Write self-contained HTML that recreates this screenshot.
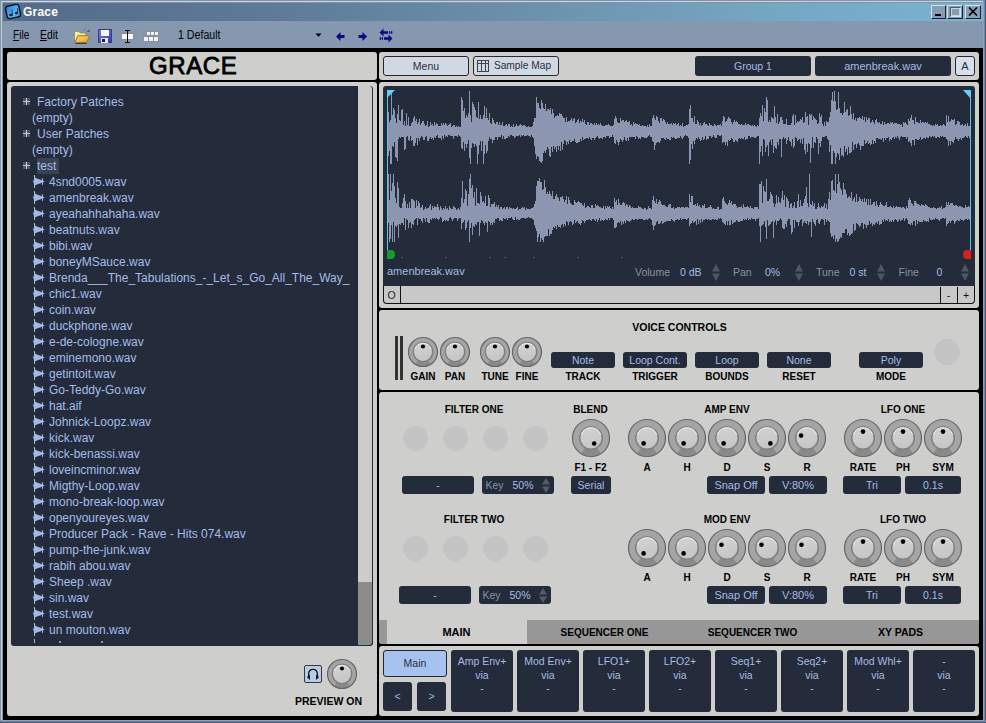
<!DOCTYPE html>
<html><head><meta charset="utf-8"><style>
html,body{margin:0;padding:0;width:986px;height:723px;overflow:hidden;background:#000}
body{position:relative;font-family:"Liberation Sans",sans-serif}
body div, body svg{position:absolute}
.t{white-space:nowrap}
</style></head><body>
<svg width="0" height="0" style="left:0;top:0"><defs><linearGradient id="kg" x1="0" y1="0" x2="0.3" y2="1"><stop offset="0" stop-color="#d4d4d4"/><stop offset="1" stop-color="#c6c6c6"/></linearGradient></defs></svg>
<div style="left:0px;top:0px;width:986px;height:723px;background:#000;"></div>
<div style="left:0px;top:0px;width:986px;height:3px;background:#7f93ab;"></div>
<div style="left:0px;top:0px;width:3px;height:723px;background:#8094ac;"></div>
<div style="left:1px;top:1px;width:984px;height:1px;background:#c8d4e0;"></div>
<div style="left:1px;top:1px;width:1px;height:721px;background:#c4d0dc;"></div>
<div style="left:983px;top:0px;width:3px;height:723px;background:#6e84a2;"></div>
<div style="left:983px;top:1px;width:1px;height:720px;background:#8aa0bd;"></div>
<div style="left:985px;top:0px;width:1px;height:723px;background:#4a5a70;"></div>
<div style="left:0px;top:720px;width:986px;height:3px;background:#6e84a2;"></div>
<div style="left:1px;top:720px;width:983px;height:1px;background:#8aa0bd;"></div>
<div style="left:0px;top:722px;width:986px;height:1px;background:#4a5a70;"></div>
<div style="left:3px;top:3px;width:980px;height:18px;background:linear-gradient(90deg,#556a88 0%,#5f7c9a 30%,#6a8ea8 50%,#74a4c0 75%,#7ab4d0 100%);"></div>
<svg style="left:4px;top:3px" width="18" height="17" viewBox="0 0 18 17"><defs><linearGradient id="ig" x1="0" y1="0" x2="1" y2="1"><stop offset="0" stop-color="#2a78c8"/><stop offset="0.6" stop-color="#48b8f8"/><stop offset="1" stop-color="#30a0f0"/></linearGradient></defs><g transform="rotate(-12 9 8.5)"><rect x="2.2" y="2.2" width="13.6" height="12.6" rx="2.5" fill="url(#ig)" stroke="#080808" stroke-width="1.3"/></g><ellipse cx="7" cy="12" rx="1.8" ry="1.3" fill="#301818"/><path d="M8.4 11.8 L8 6.5" stroke="#403040" stroke-width="1"/><ellipse cx="12.5" cy="10" rx="1.6" ry="1.2" fill="#301818"/><path d="M13.8 9.8 L13.5 5.2" stroke="#403040" stroke-width="1"/></svg>
<div class="t" style="left:23px;top:6.34px;font-size:12px;line-height:12px;font-weight:700;color:#fff;letter-spacing:0.2px">Grace</div>
<div style="left:931px;top:5px;width:15px;height:14px;background:#8a9cb4;box-sizing:border-box;border-top:1px solid #d8e2ec;border-left:1px solid #d8e2ec;border-right:1px solid #1c2430;border-bottom:1px solid #1c2430"></div>
<div style="left:935px;top:14px;width:6px;height:2px;background:#000"></div>
<div style="left:947px;top:5px;width:16px;height:14px;background:#8a9cb4;box-sizing:border-box;border-top:1px solid #d8e2ec;border-left:1px solid #d8e2ec;border-right:1px solid #1c2430;border-bottom:1px solid #1c2430"></div>
<div style="left:950px;top:7px;width:11px;height:10px;box-sizing:border-box;border-top:1px solid #4a5a70;border-left:1px solid #4a5a70;border-right:1px solid #d8e2ec;border-bottom:1px solid #d8e2ec"></div><div style="left:951px;top:8px;width:9px;height:8px;box-sizing:border-box;border:1px solid #c8d4e0"></div>
<div style="left:965px;top:5px;width:16px;height:14px;background:#8a9cb4;box-sizing:border-box;border-top:1px solid #d8e2ec;border-left:1px solid #d8e2ec;border-right:1px solid #1c2430;border-bottom:1px solid #1c2430"></div>
<svg style="left:968px;top:7px" width="10" height="9" viewBox="0 0 10 9"><path d="M1 0.5 L9 8.5 M9 0.5 L1 8.5" stroke="#000" stroke-width="1.6"/></svg>
<div style="left:3px;top:21px;width:980px;height:27px;background:#8598b0;"></div>
<div class="t" style="left:12.5px;top:28.84px;font-size:12px;line-height:12px;font-weight:400;color:#000;transform:scaleX(0.84);transform-origin:0 0"><u>F</u>ile</div>
<div class="t" style="left:40px;top:28.84px;font-size:12px;line-height:12px;font-weight:400;color:#000;transform:scaleX(0.86);transform-origin:0 0"><u>E</u>dit</div>
<svg style="left:73px;top:28px" width="18" height="16" viewBox="0 0 18 16"><defs><linearGradient id="fg" x1="0" y1="0" x2="1" y2="1"><stop offset="0" stop-color="#fce070"/><stop offset="1" stop-color="#e89a20"/></linearGradient></defs><path d="M1.5 3.5 L6 3.5 L7 5 L12.5 5 L12.5 7.5 L5 7.5 L1.5 14.5Z" fill="#fbeaa0" stroke="#9a8040" stroke-width="0.7"/><path d="M1.8 14.8 L5 7.8 L16.5 7.8 L13.5 14.8Z" fill="url(#fg)" stroke="#8a7030" stroke-width="0.7"/><path d="M2.5 15.3 L13.5 15.3" stroke="#202020" stroke-width="0.9"/><path d="M10.5 2 Q12.5 0.8 14 1.5" stroke="#4a6090" stroke-width="0.8" fill="none" stroke-dasharray="1 0.8"/><path d="M13.5 4 L16.5 1.5 L16.5 4Z" fill="#3a5088"/></svg>
<svg style="left:98px;top:29px" width="15" height="14" viewBox="0 0 15 14"><defs><linearGradient id="sg" x1="0" y1="0" x2="1" y2="1"><stop offset="0" stop-color="#8080e8"/><stop offset="1" stop-color="#3434a8"/></linearGradient></defs><rect x="0" y="0" width="14" height="14" fill="url(#sg)"/><rect x="0.5" y="0.5" width="13" height="13" fill="none" stroke="#3a3a90" stroke-width="1"/><rect x="3" y="1" width="8" height="6" fill="#f4f6fc"/><rect x="3" y="9" width="7" height="5" fill="#e4e4ee"/><rect x="4" y="10" width="3" height="3" fill="#202030"/></svg>
<svg style="left:120px;top:29px" width="15" height="15" viewBox="0 0 15 15" shape-rendering="crispEdges"><rect x="1.5" y="4.5" width="12" height="6" fill="#f8f8fa" stroke="#8c9098" stroke-width="1"/><path d="M7.5 1 L7.5 14 M5 1.5 L10 1.5 M5 13.5 L10 13.5" stroke="#101010" stroke-width="1"/></svg>
<svg style="left:143px;top:31px" width="17" height="11" viewBox="0 0 17 11" shape-rendering="crispEdges"><g fill="#f0f2f6" stroke="#8a9098" stroke-width="1"><rect x="3.5" y="0.5" width="4" height="4"/><rect x="7.5" y="0.5" width="4" height="4"/><rect x="11.5" y="0.5" width="4" height="4"/><rect x="0.5" y="5.5" width="5" height="5"/><rect x="5.5" y="5.5" width="5" height="5"/><rect x="10.5" y="5.5" width="5" height="5"/></g></svg>
<div class="t" style="left:178px;top:28.84px;font-size:12px;line-height:12px;font-weight:400;color:#000;transform:scaleX(0.885);transform-origin:0 0">1 Default</div>
<svg style="left:315px;top:33px" width="7" height="5" viewBox="0 0 7 5"><path d="M0.5 0.5 L6.5 0.5 L3.5 4Z" fill="#000"/></svg>
<svg style="left:336px;top:32px" width="9" height="9" viewBox="0 0 9 9"><path d="M0 4.5 L4.5 0 L4.5 3 L8.5 3 L8.5 6 L4.5 6 L4.5 9Z" fill="#0a0a86"/></svg>
<svg style="left:358px;top:32px" width="9" height="9" viewBox="0 0 9 9"><path d="M9 4.5 L4.5 0 L4.5 3 L0.5 3 L0.5 6 L4.5 6 L4.5 9Z" fill="#0a0a86"/></svg>
<svg style="left:379px;top:28px" width="14" height="15" viewBox="0 0 14 15"><path d="M0.5 4.5 L4.5 0.5 L4.5 3.2 L9 3.2 L9 5.8 L4.5 5.8 L4.5 8.5Z" fill="#0a0a86"/><rect x="10" y="3.2" width="1.3" height="2.6" fill="#0a0a86"/><rect x="12" y="3.2" width="1.3" height="2.6" fill="#0a0a86"/><path d="M13.5 10.5 L9.5 6.5 L9.5 9.2 L5 9.2 L5 11.8 L9.5 11.8 L9.5 14.5Z" fill="#0a0a86"/><rect x="2.7" y="9.2" width="1.3" height="2.6" fill="#0a0a86"/><rect x="0.7" y="9.2" width="1.3" height="2.6" fill="#0a0a86"/></svg>
<div style="left:7px;top:52px;width:370px;height:28px;background:#cececc;border-radius:3px"></div>
<div class="t" style="left:149px;top:54px;font-size:24px;line-height:24px;-webkit-text-stroke:0.8px #000;letter-spacing:0.6px;color:#000">GRACE</div>
<div style="left:7px;top:82px;width:370px;height:634px;background:#cececc;border-radius:3px"></div>
<div style="left:11px;top:86px;width:362px;height:560px;background:#242b3a;border-radius:3px"></div>
<div style="left:358px;top:86px;width:14px;height:496px;background:#cccccc;border-radius:0 3px 0 0"></div>
<div style="left:358px;top:582px;width:14px;height:63px;background:#8c8c8c;border-radius:0 0 3px 0"></div>
<svg style="left:23px;top:98px" width="7" height="7" viewBox="0 0 7 7"><rect x="0" y="0" width="7" height="7" fill="#4c5464"/><path d="M0 3.5 L7 3.5 M3.5 0 L3.5 7" stroke="#c0cce4" stroke-width="1"/></svg>
<div class="t" style="left:37px;top:96.34px;font-size:12px;line-height:12px;font-weight:400;color:#a4bcec;">Factory Patches</div>
<div class="t" style="left:32px;top:112.34px;font-size:12px;line-height:12px;font-weight:400;color:#a4bcec;">(empty)</div>
<svg style="left:23px;top:130px" width="7" height="7" viewBox="0 0 7 7"><rect x="0" y="0" width="7" height="7" fill="#4c5464"/><path d="M0 3.5 L7 3.5 M3.5 0 L3.5 7" stroke="#c0cce4" stroke-width="1"/></svg>
<div class="t" style="left:37px;top:128.34px;font-size:12px;line-height:12px;font-weight:400;color:#a4bcec;">User Patches</div>
<div class="t" style="left:32px;top:144.34px;font-size:12px;line-height:12px;font-weight:400;color:#a4bcec;">(empty)</div>
<svg style="left:23px;top:162px" width="7" height="7" viewBox="0 0 7 7"><rect x="0" y="0" width="7" height="7" fill="#4c5464"/><path d="M0 3.5 L7 3.5 M3.5 0 L3.5 7" stroke="#c0cce4" stroke-width="1"/></svg>
<div style="left:37px;top:158px;width:22px;height:16px;background:#3a4150;"></div>
<div class="t" style="left:37px;top:160.34px;font-size:12px;line-height:12px;font-weight:400;color:#a4bcec;">test</div>
<svg style="left:33px;top:175px" width="13" height="14" viewBox="0 0 13 14"><path d="M1.5 0 L1.5 13" stroke="#a0b8e4" stroke-width="1"/><path d="M0 6.5 L2 2.6 L4.5 3.8 L8.5 5 L12 6.5 L8.5 8 L4.5 9.2 L2 10.6Z" fill="#a0b8e4"/><path d="M9.5 3.2 L9.5 9.8" stroke="#a0b8e4" stroke-width="1"/></svg>
<div class="t" style="left:49px;top:176.34px;font-size:12px;line-height:12px;font-weight:400;color:#a4bcec;white-space:pre">4snd0005.wav</div>
<svg style="left:33px;top:191px" width="13" height="14" viewBox="0 0 13 14"><path d="M1.5 0 L1.5 13" stroke="#a0b8e4" stroke-width="1"/><path d="M0 6.5 L2 2.6 L4.5 3.8 L8.5 5 L12 6.5 L8.5 8 L4.5 9.2 L2 10.6Z" fill="#a0b8e4"/><path d="M9.5 3.2 L9.5 9.8" stroke="#a0b8e4" stroke-width="1"/></svg>
<div class="t" style="left:49px;top:192.34px;font-size:12px;line-height:12px;font-weight:400;color:#a4bcec;white-space:pre">amenbreak.wav</div>
<svg style="left:33px;top:207px" width="13" height="14" viewBox="0 0 13 14"><path d="M1.5 0 L1.5 13" stroke="#a0b8e4" stroke-width="1"/><path d="M0 6.5 L2 2.6 L4.5 3.8 L8.5 5 L12 6.5 L8.5 8 L4.5 9.2 L2 10.6Z" fill="#a0b8e4"/><path d="M9.5 3.2 L9.5 9.8" stroke="#a0b8e4" stroke-width="1"/></svg>
<div class="t" style="left:49px;top:208.34px;font-size:12px;line-height:12px;font-weight:400;color:#a4bcec;white-space:pre">ayeahahhahaha.wav</div>
<svg style="left:33px;top:223px" width="13" height="14" viewBox="0 0 13 14"><path d="M1.5 0 L1.5 13" stroke="#a0b8e4" stroke-width="1"/><path d="M0 6.5 L2 2.6 L4.5 3.8 L8.5 5 L12 6.5 L8.5 8 L4.5 9.2 L2 10.6Z" fill="#a0b8e4"/><path d="M9.5 3.2 L9.5 9.8" stroke="#a0b8e4" stroke-width="1"/></svg>
<div class="t" style="left:49px;top:224.34px;font-size:12px;line-height:12px;font-weight:400;color:#a4bcec;white-space:pre">beatnuts.wav</div>
<svg style="left:33px;top:239px" width="13" height="14" viewBox="0 0 13 14"><path d="M1.5 0 L1.5 13" stroke="#a0b8e4" stroke-width="1"/><path d="M0 6.5 L2 2.6 L4.5 3.8 L8.5 5 L12 6.5 L8.5 8 L4.5 9.2 L2 10.6Z" fill="#a0b8e4"/><path d="M9.5 3.2 L9.5 9.8" stroke="#a0b8e4" stroke-width="1"/></svg>
<div class="t" style="left:49px;top:240.34px;font-size:12px;line-height:12px;font-weight:400;color:#a4bcec;white-space:pre">bibi.wav</div>
<svg style="left:33px;top:255px" width="13" height="14" viewBox="0 0 13 14"><path d="M1.5 0 L1.5 13" stroke="#a0b8e4" stroke-width="1"/><path d="M0 6.5 L2 2.6 L4.5 3.8 L8.5 5 L12 6.5 L8.5 8 L4.5 9.2 L2 10.6Z" fill="#a0b8e4"/><path d="M9.5 3.2 L9.5 9.8" stroke="#a0b8e4" stroke-width="1"/></svg>
<div class="t" style="left:49px;top:256.34px;font-size:12px;line-height:12px;font-weight:400;color:#a4bcec;white-space:pre">boneyMSauce.wav</div>
<svg style="left:33px;top:271px" width="13" height="14" viewBox="0 0 13 14"><path d="M1.5 0 L1.5 13" stroke="#a0b8e4" stroke-width="1"/><path d="M0 6.5 L2 2.6 L4.5 3.8 L8.5 5 L12 6.5 L8.5 8 L4.5 9.2 L2 10.6Z" fill="#a0b8e4"/><path d="M9.5 3.2 L9.5 9.8" stroke="#a0b8e4" stroke-width="1"/></svg>
<div class="t" style="left:49px;top:272.34px;font-size:12px;line-height:12px;font-weight:400;color:#a4bcec;white-space:pre">Brenda___The_Tabulations_-_Let_s_Go_All_The_Way_</div>
<svg style="left:33px;top:287px" width="13" height="14" viewBox="0 0 13 14"><path d="M1.5 0 L1.5 13" stroke="#a0b8e4" stroke-width="1"/><path d="M0 6.5 L2 2.6 L4.5 3.8 L8.5 5 L12 6.5 L8.5 8 L4.5 9.2 L2 10.6Z" fill="#a0b8e4"/><path d="M9.5 3.2 L9.5 9.8" stroke="#a0b8e4" stroke-width="1"/></svg>
<div class="t" style="left:49px;top:288.34px;font-size:12px;line-height:12px;font-weight:400;color:#a4bcec;white-space:pre">chic1.wav</div>
<svg style="left:33px;top:303px" width="13" height="14" viewBox="0 0 13 14"><path d="M1.5 0 L1.5 13" stroke="#a0b8e4" stroke-width="1"/><path d="M0 6.5 L2 2.6 L4.5 3.8 L8.5 5 L12 6.5 L8.5 8 L4.5 9.2 L2 10.6Z" fill="#a0b8e4"/><path d="M9.5 3.2 L9.5 9.8" stroke="#a0b8e4" stroke-width="1"/></svg>
<div class="t" style="left:49px;top:304.34px;font-size:12px;line-height:12px;font-weight:400;color:#a4bcec;white-space:pre">coin.wav</div>
<svg style="left:33px;top:319px" width="13" height="14" viewBox="0 0 13 14"><path d="M1.5 0 L1.5 13" stroke="#a0b8e4" stroke-width="1"/><path d="M0 6.5 L2 2.6 L4.5 3.8 L8.5 5 L12 6.5 L8.5 8 L4.5 9.2 L2 10.6Z" fill="#a0b8e4"/><path d="M9.5 3.2 L9.5 9.8" stroke="#a0b8e4" stroke-width="1"/></svg>
<div class="t" style="left:49px;top:320.34px;font-size:12px;line-height:12px;font-weight:400;color:#a4bcec;white-space:pre">duckphone.wav</div>
<svg style="left:33px;top:335px" width="13" height="14" viewBox="0 0 13 14"><path d="M1.5 0 L1.5 13" stroke="#a0b8e4" stroke-width="1"/><path d="M0 6.5 L2 2.6 L4.5 3.8 L8.5 5 L12 6.5 L8.5 8 L4.5 9.2 L2 10.6Z" fill="#a0b8e4"/><path d="M9.5 3.2 L9.5 9.8" stroke="#a0b8e4" stroke-width="1"/></svg>
<div class="t" style="left:49px;top:336.34px;font-size:12px;line-height:12px;font-weight:400;color:#a4bcec;white-space:pre">e-de-cologne.wav</div>
<svg style="left:33px;top:351px" width="13" height="14" viewBox="0 0 13 14"><path d="M1.5 0 L1.5 13" stroke="#a0b8e4" stroke-width="1"/><path d="M0 6.5 L2 2.6 L4.5 3.8 L8.5 5 L12 6.5 L8.5 8 L4.5 9.2 L2 10.6Z" fill="#a0b8e4"/><path d="M9.5 3.2 L9.5 9.8" stroke="#a0b8e4" stroke-width="1"/></svg>
<div class="t" style="left:49px;top:352.34px;font-size:12px;line-height:12px;font-weight:400;color:#a4bcec;white-space:pre">eminemono.wav</div>
<svg style="left:33px;top:367px" width="13" height="14" viewBox="0 0 13 14"><path d="M1.5 0 L1.5 13" stroke="#a0b8e4" stroke-width="1"/><path d="M0 6.5 L2 2.6 L4.5 3.8 L8.5 5 L12 6.5 L8.5 8 L4.5 9.2 L2 10.6Z" fill="#a0b8e4"/><path d="M9.5 3.2 L9.5 9.8" stroke="#a0b8e4" stroke-width="1"/></svg>
<div class="t" style="left:49px;top:368.34px;font-size:12px;line-height:12px;font-weight:400;color:#a4bcec;white-space:pre">getintoit.wav</div>
<svg style="left:33px;top:383px" width="13" height="14" viewBox="0 0 13 14"><path d="M1.5 0 L1.5 13" stroke="#a0b8e4" stroke-width="1"/><path d="M0 6.5 L2 2.6 L4.5 3.8 L8.5 5 L12 6.5 L8.5 8 L4.5 9.2 L2 10.6Z" fill="#a0b8e4"/><path d="M9.5 3.2 L9.5 9.8" stroke="#a0b8e4" stroke-width="1"/></svg>
<div class="t" style="left:49px;top:384.34px;font-size:12px;line-height:12px;font-weight:400;color:#a4bcec;white-space:pre">Go-Teddy-Go.wav</div>
<svg style="left:33px;top:399px" width="13" height="14" viewBox="0 0 13 14"><path d="M1.5 0 L1.5 13" stroke="#a0b8e4" stroke-width="1"/><path d="M0 6.5 L2 2.6 L4.5 3.8 L8.5 5 L12 6.5 L8.5 8 L4.5 9.2 L2 10.6Z" fill="#a0b8e4"/><path d="M9.5 3.2 L9.5 9.8" stroke="#a0b8e4" stroke-width="1"/></svg>
<div class="t" style="left:49px;top:400.34px;font-size:12px;line-height:12px;font-weight:400;color:#a4bcec;white-space:pre">hat.aif</div>
<svg style="left:33px;top:415px" width="13" height="14" viewBox="0 0 13 14"><path d="M1.5 0 L1.5 13" stroke="#a0b8e4" stroke-width="1"/><path d="M0 6.5 L2 2.6 L4.5 3.8 L8.5 5 L12 6.5 L8.5 8 L4.5 9.2 L2 10.6Z" fill="#a0b8e4"/><path d="M9.5 3.2 L9.5 9.8" stroke="#a0b8e4" stroke-width="1"/></svg>
<div class="t" style="left:49px;top:416.34px;font-size:12px;line-height:12px;font-weight:400;color:#a4bcec;white-space:pre">Johnick-Loopz.wav</div>
<svg style="left:33px;top:431px" width="13" height="14" viewBox="0 0 13 14"><path d="M1.5 0 L1.5 13" stroke="#a0b8e4" stroke-width="1"/><path d="M0 6.5 L2 2.6 L4.5 3.8 L8.5 5 L12 6.5 L8.5 8 L4.5 9.2 L2 10.6Z" fill="#a0b8e4"/><path d="M9.5 3.2 L9.5 9.8" stroke="#a0b8e4" stroke-width="1"/></svg>
<div class="t" style="left:49px;top:432.34px;font-size:12px;line-height:12px;font-weight:400;color:#a4bcec;white-space:pre">kick.wav</div>
<svg style="left:33px;top:447px" width="13" height="14" viewBox="0 0 13 14"><path d="M1.5 0 L1.5 13" stroke="#a0b8e4" stroke-width="1"/><path d="M0 6.5 L2 2.6 L4.5 3.8 L8.5 5 L12 6.5 L8.5 8 L4.5 9.2 L2 10.6Z" fill="#a0b8e4"/><path d="M9.5 3.2 L9.5 9.8" stroke="#a0b8e4" stroke-width="1"/></svg>
<div class="t" style="left:49px;top:448.34px;font-size:12px;line-height:12px;font-weight:400;color:#a4bcec;white-space:pre">kick-benassi.wav</div>
<svg style="left:33px;top:463px" width="13" height="14" viewBox="0 0 13 14"><path d="M1.5 0 L1.5 13" stroke="#a0b8e4" stroke-width="1"/><path d="M0 6.5 L2 2.6 L4.5 3.8 L8.5 5 L12 6.5 L8.5 8 L4.5 9.2 L2 10.6Z" fill="#a0b8e4"/><path d="M9.5 3.2 L9.5 9.8" stroke="#a0b8e4" stroke-width="1"/></svg>
<div class="t" style="left:49px;top:464.34px;font-size:12px;line-height:12px;font-weight:400;color:#a4bcec;white-space:pre">loveincminor.wav</div>
<svg style="left:33px;top:479px" width="13" height="14" viewBox="0 0 13 14"><path d="M1.5 0 L1.5 13" stroke="#a0b8e4" stroke-width="1"/><path d="M0 6.5 L2 2.6 L4.5 3.8 L8.5 5 L12 6.5 L8.5 8 L4.5 9.2 L2 10.6Z" fill="#a0b8e4"/><path d="M9.5 3.2 L9.5 9.8" stroke="#a0b8e4" stroke-width="1"/></svg>
<div class="t" style="left:49px;top:480.34px;font-size:12px;line-height:12px;font-weight:400;color:#a4bcec;white-space:pre">Migthy-Loop.wav</div>
<svg style="left:33px;top:495px" width="13" height="14" viewBox="0 0 13 14"><path d="M1.5 0 L1.5 13" stroke="#a0b8e4" stroke-width="1"/><path d="M0 6.5 L2 2.6 L4.5 3.8 L8.5 5 L12 6.5 L8.5 8 L4.5 9.2 L2 10.6Z" fill="#a0b8e4"/><path d="M9.5 3.2 L9.5 9.8" stroke="#a0b8e4" stroke-width="1"/></svg>
<div class="t" style="left:49px;top:496.34px;font-size:12px;line-height:12px;font-weight:400;color:#a4bcec;white-space:pre">mono-break-loop.wav</div>
<svg style="left:33px;top:511px" width="13" height="14" viewBox="0 0 13 14"><path d="M1.5 0 L1.5 13" stroke="#a0b8e4" stroke-width="1"/><path d="M0 6.5 L2 2.6 L4.5 3.8 L8.5 5 L12 6.5 L8.5 8 L4.5 9.2 L2 10.6Z" fill="#a0b8e4"/><path d="M9.5 3.2 L9.5 9.8" stroke="#a0b8e4" stroke-width="1"/></svg>
<div class="t" style="left:49px;top:512.34px;font-size:12px;line-height:12px;font-weight:400;color:#a4bcec;white-space:pre">openyoureyes.wav</div>
<svg style="left:33px;top:527px" width="13" height="14" viewBox="0 0 13 14"><path d="M1.5 0 L1.5 13" stroke="#a0b8e4" stroke-width="1"/><path d="M0 6.5 L2 2.6 L4.5 3.8 L8.5 5 L12 6.5 L8.5 8 L4.5 9.2 L2 10.6Z" fill="#a0b8e4"/><path d="M9.5 3.2 L9.5 9.8" stroke="#a0b8e4" stroke-width="1"/></svg>
<div class="t" style="left:49px;top:528.34px;font-size:12px;line-height:12px;font-weight:400;color:#a4bcec;white-space:pre">Producer Pack - Rave - Hits 074.wav</div>
<svg style="left:33px;top:543px" width="13" height="14" viewBox="0 0 13 14"><path d="M1.5 0 L1.5 13" stroke="#a0b8e4" stroke-width="1"/><path d="M0 6.5 L2 2.6 L4.5 3.8 L8.5 5 L12 6.5 L8.5 8 L4.5 9.2 L2 10.6Z" fill="#a0b8e4"/><path d="M9.5 3.2 L9.5 9.8" stroke="#a0b8e4" stroke-width="1"/></svg>
<div class="t" style="left:49px;top:544.34px;font-size:12px;line-height:12px;font-weight:400;color:#a4bcec;white-space:pre">pump-the-junk.wav</div>
<svg style="left:33px;top:559px" width="13" height="14" viewBox="0 0 13 14"><path d="M1.5 0 L1.5 13" stroke="#a0b8e4" stroke-width="1"/><path d="M0 6.5 L2 2.6 L4.5 3.8 L8.5 5 L12 6.5 L8.5 8 L4.5 9.2 L2 10.6Z" fill="#a0b8e4"/><path d="M9.5 3.2 L9.5 9.8" stroke="#a0b8e4" stroke-width="1"/></svg>
<div class="t" style="left:49px;top:560.34px;font-size:12px;line-height:12px;font-weight:400;color:#a4bcec;white-space:pre">rabih abou.wav</div>
<svg style="left:33px;top:575px" width="13" height="14" viewBox="0 0 13 14"><path d="M1.5 0 L1.5 13" stroke="#a0b8e4" stroke-width="1"/><path d="M0 6.5 L2 2.6 L4.5 3.8 L8.5 5 L12 6.5 L8.5 8 L4.5 9.2 L2 10.6Z" fill="#a0b8e4"/><path d="M9.5 3.2 L9.5 9.8" stroke="#a0b8e4" stroke-width="1"/></svg>
<div class="t" style="left:49px;top:576.34px;font-size:12px;line-height:12px;font-weight:400;color:#a4bcec;white-space:pre">Sheep .wav</div>
<svg style="left:33px;top:591px" width="13" height="14" viewBox="0 0 13 14"><path d="M1.5 0 L1.5 13" stroke="#a0b8e4" stroke-width="1"/><path d="M0 6.5 L2 2.6 L4.5 3.8 L8.5 5 L12 6.5 L8.5 8 L4.5 9.2 L2 10.6Z" fill="#a0b8e4"/><path d="M9.5 3.2 L9.5 9.8" stroke="#a0b8e4" stroke-width="1"/></svg>
<div class="t" style="left:49px;top:592.34px;font-size:12px;line-height:12px;font-weight:400;color:#a4bcec;white-space:pre">sin.wav</div>
<svg style="left:33px;top:607px" width="13" height="14" viewBox="0 0 13 14"><path d="M1.5 0 L1.5 13" stroke="#a0b8e4" stroke-width="1"/><path d="M0 6.5 L2 2.6 L4.5 3.8 L8.5 5 L12 6.5 L8.5 8 L4.5 9.2 L2 10.6Z" fill="#a0b8e4"/><path d="M9.5 3.2 L9.5 9.8" stroke="#a0b8e4" stroke-width="1"/></svg>
<div class="t" style="left:49px;top:608.34px;font-size:12px;line-height:12px;font-weight:400;color:#a4bcec;white-space:pre">test.wav</div>
<svg style="left:33px;top:623px" width="13" height="14" viewBox="0 0 13 14"><path d="M1.5 0 L1.5 13" stroke="#a0b8e4" stroke-width="1"/><path d="M0 6.5 L2 2.6 L4.5 3.8 L8.5 5 L12 6.5 L8.5 8 L4.5 9.2 L2 10.6Z" fill="#a0b8e4"/><path d="M9.5 3.2 L9.5 9.8" stroke="#a0b8e4" stroke-width="1"/></svg>
<div class="t" style="left:49px;top:624.34px;font-size:12px;line-height:12px;font-weight:400;color:#a4bcec;white-space:pre">un mouton.wav</div>
<div style="left:34px;top:639px;width:1px;height:4px;background:#a0b8e4;"></div>
<div style="left:59px;top:641px;width:2px;height:2px;background:#8898c0;"></div>
<div style="left:101px;top:641px;width:2px;height:2px;background:#8898c0;"></div>
<div style="left:304px;top:665px;width:18px;height:18px;box-sizing:border-box;background:#b8cce8;border:1px solid #303848;border-radius:2px"></div>
<svg style="left:304px;top:665px" width="18" height="18" viewBox="0 0 18 18"><path d="M4.6 12 L4.6 9.5 Q4.6 4.3 9 4.3 Q13.4 4.3 13.4 9.5 L13.4 12" fill="none" stroke="#101820" stroke-width="1.3"/><path d="M6 9.5 L6 15 L3 12.2Z" fill="#101820"/><path d="M12 9.5 L12 15 L15 12.2Z" fill="#101820"/></svg>
<svg style="left:326px;top:658px" width="32" height="32" viewBox="326 658 32 32"><circle cx="342" cy="674" r="14.5" fill="#a5a5a5"/><path d="M342 674 L334.32 686.30 A14.5 14.5 0 0 0 349.68 686.30Z" fill="#8a8a8a"/><circle cx="342" cy="674" r="14.5" fill="none" stroke="#666666" stroke-width="1.2"/><circle cx="342" cy="674" r="9.705" fill="url(#kg)" stroke="#808080" stroke-width="1.5"/><path d="M333.82 671.02 A8.705 8.705 0 0 1 350.18 671.02" fill="none" stroke="#f2f2f2" stroke-width="1"/><circle cx="342.00" cy="668.50" r="2.1" fill="#000"/></svg>
<div class="t" style="left:178.5px;top:695.61px;width:300px;text-align:center;font-size:10.5px;line-height:10.5px;font-weight:700;color:#000;">PREVIEW ON</div>
<div style="left:379px;top:52px;width:600px;height:28px;background:#cececc;border-radius:3px"></div>
<div style="left:383px;top:56px;width:86px;height:20px;box-sizing:border-box;background:#d0d8e4;border:1px solid #262626;border-radius:3px"></div>
<div class="t" style="left:276.0px;top:61.11px;width:300px;text-align:center;font-size:10.5px;line-height:10.5px;font-weight:400;color:#2a3040;">Menu</div>
<div style="left:473px;top:56px;width:86px;height:20px;box-sizing:border-box;background:#d0d8e4;border:1px solid #262626;border-radius:3px"></div>
<svg style="left:477px;top:60px" width="12" height="12" viewBox="0 0 12 12"><rect x="0.5" y="0.5" width="11" height="11" fill="none" stroke="#3c4454"/><path d="M0.5 3.5 L11.5 3.5 M4.5 0.5 L4.5 11.5 M8.5 0.5 L8.5 11.5" stroke="#3c4454"/></svg>
<div class="t" style="left:372.5px;top:61.37px;width:300px;text-align:center;font-size:10.2px;line-height:10.2px;font-weight:400;color:#2a3040;">Sample Map</div>
<div style="left:695px;top:56px;width:116px;height:20px;background:#242b3a;border-radius:3px"></div>
<div class="t" style="left:603.0px;top:61.11px;width:300px;text-align:center;font-size:10.5px;line-height:10.5px;font-weight:400;color:#a6bce4;">Group 1</div>
<div style="left:815px;top:56px;width:136px;height:20px;background:#242b3a;border-radius:3px"></div>
<div class="t" style="left:733.0px;top:60.69px;width:300px;text-align:center;font-size:11px;line-height:11px;font-weight:400;color:#a6bce4;">amenbreak.wav</div>
<div style="left:955px;top:56px;width:20px;height:20px;box-sizing:border-box;background:#d8e0f0;border:1px solid #262626;border-radius:3px"></div>
<div class="t" style="left:815.0px;top:60.69px;width:300px;text-align:center;font-size:11px;line-height:11px;font-weight:400;color:#2a3040;">A</div>
<div style="left:379px;top:82px;width:600px;height:226px;background:#cececc;border-radius:3px"></div>
<div style="left:383px;top:86px;width:592px;height:201px;background:#242b3a;border-radius:3px 3px 0 0"></div>
<div style="left:383px;top:286px;width:592px;height:18px;box-sizing:border-box;background:#c8c8c8;border:1px solid #111;border-top:none;border-radius:0 0 4px 4px"></div>
<div style="left:400px;top:286px;width:1px;height:17px;background:#111;"></div>
<div class="t" style="left:241.5px;top:290.11px;width:300px;text-align:center;font-size:10.5px;line-height:10.5px;font-weight:400;color:#223;">O</div>
<div style="left:940px;top:287px;width:1px;height:16px;background:#111;"></div>
<div style="left:957px;top:287px;width:1px;height:16px;background:#111;"></div>
<div class="t" style="left:798.5px;top:290.11px;width:300px;text-align:center;font-size:10.5px;line-height:10.5px;font-weight:400;color:#111;">-</div>
<div class="t" style="left:816.0px;top:290.11px;width:300px;text-align:center;font-size:10.5px;line-height:10.5px;font-weight:400;color:#111;">+</div>
<svg style="left:383px;top:86px" width="593" height="200" viewBox="383 86 593 200"><path d="M388.5 111.5V156.1M389.5 121.9V151.0M390.5 120.4V164.0M391.5 91.0V164.0M392.5 115.1V145.8M393.5 107.6V146.5M394.5 109.9V142.2M395.5 118.4V156.6M396.5 123.2V158.1M397.5 113.5V160.9M398.5 105.0V139.1M399.5 120.0V137.2M400.5 120.5V137.7M401.5 110.1V137.0M402.5 108.5V137.3M403.5 124.8V136.7M404.5 121.2V150.2M405.5 125.7V149.2M406.5 113.0V137.0M407.5 124.9V136.0M408.5 116.7V139.9M409.5 125.5V141.0M410.5 126.1V135.7M411.5 123.4V140.8M412.5 122.3V140.1M413.5 117.8V146.1M414.5 116.1V146.0M415.5 121.1V142.6M416.5 119.2V137.8M417.5 123.8V144.8M418.5 121.9V137.9M419.5 119.2V140.7M420.5 125.2V138.3M421.5 122.5V136.1M422.5 120.8V137.2M423.5 120.9V140.3M424.5 123.7V139.9M425.5 126.2V137.3M426.5 124.8V135.6M427.5 120.9V140.8M428.5 126.8V140.7M429.5 126.0V138.5M430.5 121.9V137.3M431.5 125.4V138.7M432.5 124.4V138.4M433.5 126.4V140.2M434.5 121.8V137.2M435.5 124.8V137.9M436.5 123.1V135.9M437.5 123.9V135.3M438.5 126.4V137.5M439.5 125.9V137.7M440.5 126.0V137.5M441.5 123.1V139.7M442.5 125.2V136.4M443.5 122.8V138.7M444.5 125.0V134.8M445.5 122.9V136.5M446.5 123.9V136.3M447.5 125.7V137.0M448.5 125.0V135.2M449.5 124.1V135.2M450.5 123.3V136.3M451.5 126.6V136.4M452.5 126.4V136.2M453.5 124.8V138.5M454.5 125.4V136.4M455.5 127.2V136.2M456.5 125.7V136.4M457.5 127.1V136.8M458.5 125.7V135.4M459.5 127.2V135.7M460.5 127.2V136.6M461.5 96.5V147.5M462.5 100.2V149.0M463.5 110.9V141.7M464.5 108.0V150.5M465.5 118.1V144.3M466.5 114.5V148.2M467.5 117.1V144.3M468.5 113.2V139.7M469.5 91.0V158.2M470.5 115.2V164.0M471.5 122.1V148.4M472.5 101.9V142.7M473.5 104.3V143.8M474.5 107.3V147.0M475.5 109.6V143.7M476.5 116.8V145.6M477.5 117.7V164.0M478.5 101.8V153.8M479.5 119.1V145.1M480.5 114.6V141.1M481.5 119.4V151.2M482.5 119.0V141.1M483.5 114.9V164.0M484.5 105.5V154.2M485.5 117.6V145.2M486.5 108.3V153.3M487.5 117.5V151.4M488.5 119.5V140.5M489.5 113.0V137.0M490.5 122.5V139.3M491.5 124.2V139.4M492.5 118.2V143.2M493.5 119.9V140.4M494.5 122.5V140.0M495.5 123.9V137.4M496.5 121.8V137.1M497.5 122.0V139.7M498.5 124.6V136.8M499.5 122.4V136.9M500.5 125.1V137.3M501.5 124.6V135.1M502.5 122.4V138.9M503.5 125.5V135.7M504.5 125.8V139.0M505.5 124.5V138.8M506.5 124.3V137.7M507.5 125.7V137.8M508.5 124.0V135.6M509.5 123.6V137.4M510.5 127.3V135.4M511.5 126.2V135.2M512.5 126.7V135.8M513.5 124.3V135.7M514.5 126.7V138.3M515.5 125.6V136.7M516.5 124.1V136.0M517.5 126.2V136.2M518.5 126.0V135.6M519.5 124.9V134.7M520.5 124.0V136.5M521.5 124.5V134.9M522.5 126.0V136.1M523.5 124.6V135.3M524.5 125.0V136.0M525.5 126.4V135.5M526.5 126.8V135.6M527.5 126.8V135.4M528.5 126.2V136.3M529.5 126.9V135.6M530.5 126.8V136.7M531.5 126.8V135.2M532.5 126.4V137.1M533.5 122.4V138.1M534.5 117.7V146.0M535.5 118.3V154.2M536.5 96.5V159.1M537.5 102.5V156.4M538.5 103.3V156.6M539.5 107.5V161.2M540.5 108.7V161.8M541.5 100.3V162.7M542.5 102.5V161.3M543.5 108.4V152.7M544.5 108.9V150.5M545.5 103.7V153.0M546.5 110.8V150.0M547.5 108.7V146.8M548.5 108.9V148.5M549.5 110.2V156.2M550.5 107.5V157.0M551.5 113.6V146.7M552.5 109.4V152.2M553.5 113.0V145.5M554.5 117.5V148.8M555.5 115.5V147.3M556.5 115.6V151.7M557.5 115.2V146.1M558.5 116.0V150.2M559.5 113.4V145.8M560.5 114.2V151.4M561.5 114.3V141.5M562.5 116.2V150.2M563.5 118.0V143.9M564.5 117.5V140.2M565.5 121.5V141.0M566.5 116.7V145.1M567.5 121.5V142.1M568.5 121.0V143.9M569.5 121.2V140.2M570.5 120.1V142.2M571.5 117.8V141.7M572.5 121.4V140.7M573.5 118.9V141.0M574.5 118.2V138.8M575.5 122.7V141.8M576.5 121.9V143.3M577.5 120.2V142.6M578.5 119.2V142.3M579.5 122.7V142.3M580.5 120.6V138.8M581.5 122.2V141.0M582.5 119.0V137.3M583.5 121.7V139.8M584.5 120.2V139.4M585.5 123.9V139.4M586.5 125.0V138.0M587.5 121.9V138.0M588.5 122.3V139.1M589.5 125.2V137.2M590.5 123.1V138.6M591.5 122.9V139.5M592.5 123.6V138.0M593.5 124.9V138.3M594.5 123.4V140.3M595.5 125.3V138.4M596.5 122.5V137.0M597.5 124.7V136.4M598.5 124.1V137.5M599.5 124.7V139.1M600.5 122.7V138.3M601.5 124.8V138.0M602.5 125.7V138.8M603.5 126.0V137.0M604.5 126.1V136.8M605.5 124.7V137.5M606.5 125.3V136.1M607.5 125.3V135.9M608.5 123.7V136.1M609.5 124.8V137.9M610.5 125.6V137.3M611.5 126.0V137.3M612.5 126.3V135.2M613.5 125.0V136.6M614.5 119.0V142.6M615.5 116.0V143.5M616.5 117.6V140.4M617.5 122.1V142.4M618.5 123.2V144.9M619.5 123.4V141.9M620.5 118.4V139.1M621.5 121.3V140.3M622.5 119.8V141.9M623.5 120.3V140.2M624.5 121.9V137.4M625.5 120.9V140.3M626.5 120.4V141.1M627.5 121.6V137.7M628.5 122.1V140.5M629.5 120.9V137.1M630.5 124.5V136.5M631.5 124.1V136.8M632.5 125.8V136.7M633.5 121.5V136.6M634.5 123.5V136.5M635.5 123.4V138.7M636.5 123.8V136.1M637.5 123.8V136.8M638.5 124.7V139.2M639.5 123.8V137.9M640.5 126.1V139.1M641.5 125.9V137.3M642.5 125.0V137.4M643.5 126.2V136.8M644.5 125.6V137.6M645.5 125.8V137.5M646.5 126.6V138.4M647.5 125.2V136.9M648.5 126.5V136.4M649.5 124.2V135.4M650.5 125.5V137.2M651.5 125.8V136.8M652.5 118.0V141.1M653.5 115.1V142.1M654.5 117.6V149.8M655.5 119.5V144.5M656.5 116.0V143.4M657.5 117.4V142.1M658.5 121.4V142.4M659.5 122.8V142.6M660.5 118.1V141.1M661.5 117.6V138.3M662.5 121.3V138.4M663.5 118.8V138.2M664.5 119.6V138.7M665.5 121.7V140.0M666.5 124.0V137.5M667.5 121.5V139.3M668.5 124.2V139.0M669.5 124.2V140.4M670.5 123.7V139.5M671.5 122.5V136.7M672.5 124.8V138.0M673.5 122.8V136.7M674.5 124.3V137.5M675.5 122.5V139.1M676.5 125.0V138.5M677.5 123.7V138.1M678.5 123.0V138.1M679.5 126.0V138.1M680.5 124.9V135.8M681.5 126.1V137.8M682.5 123.1V138.9M683.5 126.5V137.1M684.5 126.4V135.8M685.5 125.6V135.4M686.5 125.1V135.6M687.5 125.1V136.3M688.5 124.3V137.8M689.5 108.7V164.0M690.5 104.9V160.3M691.5 118.1V144.4M692.5 118.2V149.0M693.5 121.6V140.9M694.5 115.5V143.8M695.5 124.4V140.1M696.5 123.9V138.3M697.5 119.9V138.8M698.5 122.2V136.8M699.5 124.8V138.5M700.5 123.4V140.5M701.5 125.7V139.9M702.5 124.8V137.0M703.5 122.9V140.0M704.5 122.1V138.7M705.5 124.0V136.2M706.5 124.2V139.7M707.5 124.7V139.2M708.5 125.8V138.9M709.5 123.2V136.0M710.5 124.9V135.6M711.5 125.3V137.7M712.5 125.9V137.3M713.5 126.2V135.4M714.5 124.4V136.5M715.5 124.8V138.1M716.5 125.8V137.8M717.5 125.2V135.2M718.5 124.8V135.3M719.5 124.7V136.2M720.5 124.2V136.3M721.5 126.4V135.4M722.5 121.0V143.2M723.5 116.1V141.8M724.5 117.1V141.6M725.5 122.3V144.8M726.5 120.7V142.3M727.5 119.1V145.5M728.5 116.7V139.6M729.5 118.0V140.8M730.5 119.0V139.8M731.5 122.1V137.8M732.5 123.5V139.3M733.5 121.6V141.6M734.5 120.0V141.5M735.5 122.2V139.8M736.5 120.8V140.8M737.5 122.3V141.8M738.5 123.7V138.9M739.5 123.8V138.4M740.5 125.0V139.4M741.5 123.8V137.7M742.5 125.1V138.6M743.5 124.8V138.8M744.5 125.2V136.7M745.5 122.7V139.6M746.5 124.8V138.6M747.5 124.4V139.0M748.5 124.4V136.3M749.5 124.5V135.8M750.5 124.8V137.6M751.5 125.9V137.0M752.5 125.4V136.5M753.5 125.7V137.4M754.5 125.2V137.7M755.5 125.5V137.8M756.5 126.6V136.7M757.5 125.3V135.5M758.5 125.7V136.0M759.5 117.9V164.0M760.5 113.1V152.0M761.5 116.0V146.1M762.5 104.7V156.0M763.5 121.0V138.6M764.5 107.6V140.0M765.5 112.0V152.4M766.5 97.3V147.3M767.5 100.2V144.7M768.5 121.7V155.6M769.5 119.6V141.8M770.5 122.0V139.9M771.5 117.1V145.4M772.5 117.6V138.7M773.5 118.9V153.1M774.5 105.6V145.9M775.5 117.2V148.0M776.5 123.1V148.7M777.5 113.6V141.5M778.5 123.7V145.0M779.5 121.7V138.6M780.5 116.9V139.1M781.5 116.7V156.5M782.5 120.0V138.8M783.5 123.8V137.1M784.5 124.2V138.8M785.5 123.9V137.6M786.5 119.3V143.8M787.5 125.4V140.1M788.5 124.8V137.4M789.5 124.7V141.0M790.5 124.6V141.6M791.5 123.0V146.1M792.5 116.4V138.6M793.5 113.7V148.1M794.5 124.7V146.1M795.5 115.4V136.9M796.5 123.3V138.4M797.5 120.7V141.0M798.5 121.8V140.2M799.5 121.3V138.9M800.5 118.9V143.4M801.5 120.3V138.7M802.5 116.7V144.0M803.5 123.4V137.7M804.5 122.1V150.4M805.5 111.7V153.6M806.5 116.6V143.7M807.5 115.6V152.3M808.5 124.7V143.4M809.5 114.4V144.0M810.5 115.0V163.4M811.5 114.1V148.1M812.5 120.4V137.4M813.5 115.9V147.5M814.5 118.1V141.5M815.5 119.2V142.6M816.5 120.1V137.4M817.5 124.3V138.8M818.5 123.4V153.6M819.5 112.7V143.0M820.5 116.6V146.5M821.5 115.3V140.8M822.5 124.3V136.9M823.5 125.8V137.0M824.5 122.3V136.8M825.5 126.0V136.2M826.5 120.6V136.1M827.5 121.7V138.8M828.5 122.3V139.6M829.5 116.6V151.7M830.5 112.3V144.9M831.5 100.3V164.0M832.5 91.9V164.0M833.5 101.3V150.7M834.5 91.0V152.6M835.5 100.8V164.0M836.5 109.5V157.3M837.5 108.5V152.9M838.5 92.0V154.2M839.5 107.7V159.6M840.5 112.9V147.7M841.5 112.8V156.1M842.5 115.0V155.3M843.5 113.2V157.0M844.5 101.8V146.4M845.5 112.0V152.2M846.5 109.8V148.7M847.5 109.3V155.2M848.5 116.3V146.9M849.5 115.4V152.9M850.5 106.1V153.1M851.5 113.9V151.8M852.5 119.4V142.4M853.5 112.9V150.1M854.5 119.5V144.6M855.5 117.8V143.8M856.5 121.0V148.1M857.5 118.3V143.6M858.5 118.0V142.7M859.5 117.1V144.8M860.5 117.8V150.3M861.5 119.0V145.8M862.5 115.8V145.5M863.5 119.7V146.4M864.5 116.8V140.3M865.5 121.6V143.8M866.5 117.3V142.5M867.5 119.5V141.2M868.5 118.4V144.1M869.5 118.2V142.8M870.5 123.1V145.3M871.5 122.4V143.9M872.5 119.8V140.3M873.5 122.3V143.6M874.5 124.0V141.3M875.5 119.6V143.0M876.5 119.2V137.6M877.5 122.3V137.6M878.5 122.5V139.4M879.5 121.5V139.4M880.5 124.4V138.9M881.5 124.0V140.2M882.5 120.7V138.0M883.5 125.1V141.9M884.5 122.3V138.2M885.5 123.5V139.7M886.5 123.6V138.3M887.5 123.3V138.0M888.5 122.9V137.0M889.5 123.9V140.5M890.5 122.3V138.8M891.5 122.6V139.6M892.5 122.1V137.6M893.5 124.3V136.6M894.5 123.3V139.0M895.5 122.6V137.1M896.5 123.2V137.7M897.5 123.7V136.3M898.5 124.4V138.2M899.5 123.5V139.7M900.5 125.2V136.8M901.5 124.4V135.9M902.5 126.5V136.5M903.5 122.1V136.5M904.5 122.8V137.4M905.5 122.3V136.6M906.5 123.8V139.1M907.5 124.6V136.9M908.5 119.3V142.1M909.5 120.9V141.3M910.5 118.0V142.5M911.5 115.4V145.6M912.5 119.8V140.2M913.5 119.9V140.3M914.5 123.5V145.0M915.5 117.2V138.5M916.5 121.5V139.1M917.5 122.4V140.2M918.5 122.8V140.0M919.5 123.1V138.5M920.5 119.6V136.9M921.5 123.4V139.5M922.5 122.0V138.6M923.5 121.7V138.4M924.5 123.4V137.5M925.5 121.6V139.0M926.5 122.5V137.3M927.5 122.1V138.4M928.5 123.8V137.5M929.5 123.8V136.3M930.5 125.4V137.0M931.5 125.0V136.5M932.5 126.0V135.6M933.5 125.0V136.7M934.5 125.5V136.2M935.5 123.5V137.5M936.5 124.6V137.5M937.5 124.0V137.2M938.5 126.4V136.8M939.5 126.2V138.1M940.5 125.3V135.8M941.5 125.8V136.9M942.5 125.0V136.1M943.5 124.4V136.7M944.5 124.8V136.9M945.5 126.3V137.3M946.5 114.5V139.4M947.5 121.8V139.6M948.5 116.4V145.8M949.5 121.5V140.8M950.5 120.7V145.1M951.5 119.2V140.6M952.5 120.3V142.3M953.5 120.0V142.7M954.5 119.4V139.7M955.5 124.8V137.4M956.5 123.8V138.7M957.5 120.8V139.4M958.5 120.7V140.6M959.5 122.4V139.0M960.5 124.5V137.8M961.5 124.7V139.6M962.5 124.0V138.0M963.5 125.5V137.5M964.5 125.1V136.7M965.5 124.0V136.2M966.5 125.5V136.7M967.5 123.2V137.5M968.5 125.7V136.2M969.5 125.5V137.6M388.5 174.0V223.4M389.5 199.6V242.0M390.5 174.0V238.9M391.5 191.2V225.4M392.5 183.3V242.0M393.5 174.4V222.3M394.5 186.3V242.0M395.5 197.7V225.9M396.5 202.8V227.2M397.5 181.9V225.2M398.5 187.9V237.7M399.5 207.0V224.1M400.5 208.2V224.5M401.5 207.6V222.6M402.5 202.6V223.1M403.5 198.0V225.0M404.5 194.0V218.3M405.5 201.1V230.4M406.5 207.9V218.8M407.5 204.2V219.8M408.5 208.3V228.1M409.5 202.0V223.3M410.5 208.0V222.0M411.5 198.9V227.6M412.5 198.9V224.4M413.5 199.6V224.5M414.5 200.7V220.2M415.5 207.5V219.1M416.5 199.5V218.4M417.5 205.5V224.9M418.5 200.7V218.4M419.5 203.4V218.8M420.5 207.8V218.9M421.5 206.6V221.3M422.5 205.4V222.6M423.5 209.5V217.8M424.5 208.9V219.1M425.5 207.4V222.4M426.5 208.7V217.5M427.5 208.0V222.4M428.5 207.9V223.3M429.5 206.4V222.9M430.5 204.0V218.8M431.5 209.8V219.7M432.5 206.4V218.1M433.5 207.5V219.4M434.5 206.2V218.3M435.5 206.7V219.0M436.5 206.6V218.3M437.5 204.1V219.4M438.5 207.3V220.0M439.5 209.5V218.6M440.5 205.7V217.3M441.5 207.8V218.2M442.5 209.8V221.5M443.5 208.2V221.0M444.5 208.9V220.3M445.5 205.7V220.6M446.5 209.4V220.0M447.5 207.6V220.5M448.5 209.5V221.2M449.5 205.5V218.3M450.5 208.2V217.4M451.5 209.4V218.5M452.5 208.5V220.5M453.5 205.6V218.9M454.5 206.5V217.6M455.5 208.1V218.3M456.5 209.5V218.3M457.5 209.2V220.7M458.5 208.4V218.5M459.5 209.9V217.6M460.5 207.1V217.7M461.5 197.9V228.5M462.5 180.5V222.9M463.5 202.5V222.1M464.5 199.3V220.1M465.5 189.4V229.7M466.5 191.4V228.4M467.5 205.7V221.6M468.5 194.3V220.4M469.5 179.1V242.0M470.5 174.0V227.5M471.5 187.9V222.7M472.5 184.5V234.7M473.5 197.6V226.1M474.5 191.8V227.4M475.5 205.8V224.2M476.5 187.9V225.4M477.5 203.3V221.7M478.5 203.2V222.0M479.5 203.5V235.6M480.5 192.2V223.4M481.5 196.0V220.0M482.5 201.7V220.8M483.5 201.0V223.1M484.5 202.6V224.8M485.5 195.5V221.7M486.5 205.6V223.1M487.5 205.8V231.9M488.5 194.8V221.3M489.5 198.3V222.4M490.5 207.3V225.1M491.5 204.1V223.3M492.5 204.2V225.4M493.5 204.4V221.7M494.5 202.2V223.2M495.5 207.3V218.7M496.5 205.3V219.1M497.5 206.6V218.4M498.5 205.0V217.6M499.5 208.9V220.7M500.5 207.4V220.1M501.5 207.0V221.0M502.5 208.6V220.8M503.5 208.3V218.1M504.5 207.2V218.8M505.5 208.9V218.8M506.5 206.9V218.4M507.5 206.9V220.2M508.5 209.1V218.1M509.5 206.8V217.5M510.5 207.5V218.4M511.5 207.8V217.1M512.5 209.4V219.0M513.5 207.5V219.6M514.5 208.7V219.6M515.5 209.3V217.3M516.5 207.8V219.8M517.5 207.4V218.6M518.5 209.8V219.8M519.5 208.5V220.1M520.5 209.4V218.5M521.5 208.3V217.5M522.5 207.1V218.3M523.5 207.8V218.4M524.5 206.9V218.4M525.5 209.7V218.7M526.5 208.1V217.9M527.5 209.0V217.5M528.5 208.5V217.0M529.5 209.0V218.1M530.5 209.0V217.5M531.5 207.6V218.2M532.5 208.1V218.8M533.5 207.1V220.0M534.5 203.7V225.1M535.5 201.2V228.3M536.5 186.1V231.1M537.5 181.1V242.0M538.5 181.0V236.7M539.5 178.1V233.8M540.5 181.7V242.0M541.5 182.3V238.2M542.5 189.5V240.1M543.5 188.8V241.9M544.5 179.8V236.5M545.5 187.0V236.4M546.5 194.1V236.0M547.5 192.1V235.7M548.5 194.2V229.3M549.5 191.0V235.9M550.5 193.7V233.8M551.5 195.7V233.9M552.5 190.8V229.9M553.5 198.8V226.7M554.5 199.2V227.5M555.5 196.1V226.1M556.5 194.2V229.0M557.5 197.0V225.0M558.5 197.9V227.3M559.5 200.5V226.9M560.5 197.3V227.8M561.5 197.1V224.5M562.5 196.2V224.4M563.5 199.4V226.6M564.5 201.9V224.1M565.5 200.1V226.0M566.5 195.5V221.3M567.5 204.3V222.4M568.5 196.8V224.6M569.5 199.9V222.0M570.5 203.4V221.2M571.5 203.6V222.3M572.5 205.1V224.8M573.5 205.4V223.9M574.5 200.0V220.0M575.5 202.0V223.4M576.5 202.7V222.1M577.5 201.6V221.0M578.5 201.0V223.4M579.5 202.0V223.8M580.5 202.8V224.6M581.5 202.7V222.9M582.5 204.9V220.2M583.5 205.6V221.0M584.5 202.5V222.8M585.5 207.8V221.1M586.5 206.8V220.2M587.5 206.0V220.2M588.5 206.3V220.4M589.5 206.5V219.4M590.5 207.9V220.3M591.5 205.3V221.3M592.5 205.4V218.6M593.5 207.8V219.2M594.5 208.2V220.3M595.5 204.2V221.4M596.5 205.9V219.4M597.5 204.7V221.9M598.5 206.3V220.2M599.5 207.2V218.3M600.5 207.2V220.7M601.5 207.6V219.9M602.5 207.6V219.6M603.5 206.3V220.6M604.5 208.8V219.9M605.5 205.7V219.2M606.5 208.4V219.5M607.5 205.9V220.1M608.5 207.0V218.0M609.5 205.6V220.2M610.5 208.1V218.0M611.5 208.7V218.1M612.5 207.1V218.3M613.5 208.6V219.5M614.5 197.5V227.7M615.5 202.0V227.5M616.5 200.2V227.4M617.5 204.7V223.0M618.5 199.4V222.2M619.5 203.4V223.3M620.5 204.9V221.2M621.5 204.9V224.8M622.5 203.3V221.5M623.5 202.3V223.8M624.5 202.6V220.8M625.5 205.9V222.6M626.5 204.3V219.9M627.5 204.7V221.3M628.5 207.0V220.7M629.5 204.5V221.7M630.5 205.7V220.7M631.5 207.9V220.3M632.5 206.6V219.0M633.5 208.1V219.7M634.5 207.5V220.2M635.5 208.0V218.5M636.5 207.8V218.5M637.5 207.7V219.7M638.5 205.6V219.4M639.5 207.3V218.6M640.5 207.1V219.4M641.5 207.8V218.8M642.5 208.8V218.5M643.5 208.7V219.7M644.5 207.6V220.2M645.5 207.6V220.2M646.5 209.6V218.7M647.5 208.9V219.9M648.5 206.3V219.4M649.5 208.0V218.3M650.5 207.8V218.7M651.5 208.7V219.8M652.5 200.1V224.8M653.5 195.6V229.9M654.5 200.5V226.0M655.5 203.4V224.8M656.5 199.4V222.3M657.5 204.4V221.4M658.5 202.0V223.8M659.5 200.3V224.4M660.5 200.7V223.0M661.5 203.8V220.5M662.5 204.5V223.6M663.5 204.7V222.9M664.5 205.4V222.3M665.5 206.2V221.8M666.5 207.2V220.9M667.5 206.5V221.3M668.5 204.7V220.7M669.5 204.1V221.0M670.5 204.2V220.6M671.5 207.7V218.9M672.5 207.6V220.2M673.5 206.9V221.1M674.5 208.5V221.6M675.5 207.5V220.2M676.5 207.5V219.5M677.5 207.3V219.0M678.5 206.9V220.0M679.5 206.7V220.1M680.5 207.5V218.0M681.5 207.3V220.0M682.5 207.4V219.2M683.5 207.0V219.4M684.5 207.8V219.4M685.5 207.3V218.5M686.5 207.0V219.6M687.5 207.1V218.6M688.5 208.0V218.3M689.5 194.4V225.5M690.5 202.2V223.6M691.5 195.6V223.2M692.5 195.9V220.5M693.5 205.0V223.1M694.5 205.1V222.4M695.5 204.4V221.1M696.5 205.6V224.8M697.5 203.0V218.9M698.5 206.3V223.9M699.5 204.8V220.0M700.5 206.7V222.6M701.5 208.0V218.6M702.5 205.2V221.7M703.5 206.2V220.3M704.5 204.4V219.8M705.5 207.9V218.7M706.5 208.3V219.4M707.5 208.2V219.6M708.5 207.2V219.4M709.5 207.2V219.7M710.5 205.3V220.1M711.5 207.4V220.0M712.5 208.7V219.2M713.5 208.0V219.0M714.5 208.5V219.8M715.5 209.2V218.7M716.5 209.1V219.6M717.5 207.4V219.5M718.5 207.1V217.8M719.5 209.5V218.8M720.5 208.8V218.3M721.5 209.0V218.6M722.5 199.0V222.1M723.5 197.3V222.6M724.5 200.9V223.7M725.5 203.4V224.8M726.5 203.7V221.4M727.5 204.8V225.2M728.5 203.0V221.0M729.5 200.4V224.5M730.5 202.5V224.7M731.5 200.6V219.9M732.5 204.7V224.2M733.5 204.3V223.0M734.5 203.9V222.4M735.5 204.2V221.9M736.5 206.2V219.8M737.5 208.0V220.6M738.5 207.2V222.4M739.5 206.8V222.2M740.5 207.1V220.8M741.5 206.2V221.2M742.5 207.7V220.8M743.5 204.0V219.1M744.5 206.7V219.8M745.5 207.3V219.0M746.5 207.2V219.5M747.5 206.2V218.3M748.5 207.4V220.2M749.5 208.1V219.1M750.5 206.0V219.6M751.5 207.8V217.9M752.5 208.3V219.1M753.5 208.6V219.1M754.5 207.1V219.3M755.5 207.0V220.5M756.5 207.4V219.3M757.5 207.3V219.3M758.5 209.2V218.4M759.5 184.3V226.3M760.5 184.4V242.0M761.5 180.5V226.1M762.5 203.4V224.6M763.5 186.1V223.5M764.5 191.1V220.6M765.5 191.6V226.7M766.5 179.2V238.9M767.5 200.8V220.3M768.5 201.2V226.1M769.5 198.8V224.9M770.5 191.9V223.8M771.5 193.7V221.6M772.5 196.0V220.5M773.5 203.2V238.2M774.5 206.7V222.4M775.5 204.4V220.0M776.5 194.5V224.5M777.5 202.6V221.4M778.5 196.5V220.5M779.5 202.2V220.2M780.5 203.0V218.2M781.5 197.6V220.4M782.5 191.3V227.9M783.5 199.7V228.6M784.5 195.0V228.7M785.5 207.2V224.3M786.5 196.8V226.8M787.5 198.5V220.7M788.5 201.1V218.7M789.5 207.8V218.6M790.5 204.4V224.7M791.5 202.8V233.6M792.5 208.0V231.6M793.5 206.2V220.1M794.5 202.0V227.8M795.5 208.0V219.8M796.5 208.2V221.5M797.5 201.3V221.5M798.5 193.9V225.5M799.5 206.6V221.8M800.5 200.0V220.0M801.5 205.5V219.0M802.5 205.5V226.3M803.5 203.2V223.3M804.5 198.5V221.0M805.5 196.1V222.7M806.5 187.0V224.1M807.5 202.6V221.2M808.5 207.2V224.9M809.5 174.0V222.3M810.5 204.2V222.2M811.5 205.0V237.3M812.5 200.7V219.1M813.5 206.3V221.6M814.5 202.9V223.6M815.5 209.0V226.4M816.5 208.5V220.0M817.5 207.1V218.5M818.5 202.7V223.0M819.5 207.1V223.9M820.5 207.5V221.1M821.5 206.0V219.2M822.5 206.8V219.0M823.5 206.1V220.2M824.5 202.9V224.5M825.5 207.8V218.5M826.5 204.0V222.2M827.5 209.2V220.4M828.5 199.3V220.9M829.5 192.4V222.0M830.5 199.8V233.3M831.5 181.2V237.0M832.5 180.3V236.3M833.5 190.4V239.1M834.5 191.1V234.5M835.5 174.0V242.0M836.5 192.7V238.6M837.5 184.1V242.0M838.5 174.0V240.7M839.5 182.3V239.1M840.5 187.7V236.6M841.5 190.2V237.7M842.5 194.6V233.3M843.5 183.0V233.3M844.5 188.6V232.7M845.5 189.7V228.7M846.5 194.3V228.7M847.5 197.8V234.7M848.5 196.5V232.9M849.5 195.5V236.0M850.5 198.4V234.9M851.5 192.2V233.9M852.5 200.6V232.5M853.5 199.1V223.9M854.5 197.1V230.6M855.5 201.9V229.8M856.5 194.3V223.2M857.5 202.2V223.8M858.5 201.1V224.6M859.5 197.4V227.3M860.5 198.6V226.3M861.5 200.6V223.3M862.5 198.6V222.7M863.5 202.3V228.6M864.5 198.0V224.4M865.5 202.3V225.1M866.5 198.7V227.6M867.5 204.8V224.5M868.5 199.3V225.2M869.5 205.4V220.7M870.5 198.6V223.7M871.5 205.4V222.6M872.5 203.8V225.6M873.5 201.9V224.2M874.5 202.4V225.4M875.5 206.3V223.2M876.5 201.4V221.7M877.5 204.5V223.6M878.5 207.0V221.2M879.5 205.1V224.7M880.5 201.5V223.6M881.5 203.8V223.9M882.5 205.4V220.4M883.5 205.7V222.1M884.5 205.6V218.9M885.5 205.3V220.6M886.5 202.4V219.5M887.5 206.9V220.6M888.5 207.1V219.0M889.5 206.5V222.0M890.5 205.9V220.7M891.5 207.0V222.4M892.5 207.8V220.0M893.5 205.5V222.4M894.5 208.3V219.6M895.5 207.1V219.2M896.5 205.9V219.5M897.5 207.4V222.0M898.5 207.0V220.8M899.5 207.2V218.6M900.5 206.5V221.0M901.5 208.1V220.1M902.5 206.9V220.1M903.5 206.9V218.2M904.5 208.0V221.2M905.5 208.6V219.1M906.5 206.0V218.2M907.5 207.6V219.6M908.5 199.9V223.9M909.5 197.7V223.7M910.5 200.4V224.9M911.5 202.9V222.9M912.5 203.5V224.6M913.5 206.1V221.3M914.5 200.5V220.9M915.5 201.4V225.7M916.5 202.5V220.2M917.5 204.1V223.6M918.5 204.4V221.0M919.5 205.4V222.3M920.5 206.2V221.6M921.5 204.3V222.4M922.5 204.8V221.6M923.5 205.0V220.3M924.5 205.8V221.2M925.5 203.9V221.3M926.5 204.8V221.7M927.5 206.2V220.7M928.5 206.9V221.9M929.5 207.3V218.3M930.5 207.6V220.2M931.5 208.0V219.7M932.5 207.6V220.3M933.5 206.7V219.0M934.5 208.0V219.9M935.5 207.8V218.2M936.5 209.1V218.5M937.5 208.1V219.4M938.5 208.0V219.9M939.5 206.7V220.6M940.5 208.4V218.6M941.5 205.9V219.4M942.5 209.1V217.5M943.5 208.2V218.1M944.5 208.4V219.1M945.5 207.3V217.9M946.5 201.8V225.6M947.5 204.6V223.8M948.5 202.2V223.4M949.5 204.7V220.9M950.5 203.1V222.6M951.5 203.0V221.0M952.5 203.3V220.0M953.5 204.7V220.7M954.5 205.9V223.6M955.5 204.9V221.9M956.5 204.8V220.6M957.5 206.1V220.2M958.5 206.5V220.7M959.5 206.0V220.9M960.5 205.7V219.4M961.5 207.4V219.5M962.5 206.6V220.2M963.5 208.0V220.5M964.5 207.5V219.5M965.5 205.4V219.3M966.5 207.4V219.4M967.5 207.0V219.9M968.5 206.3V219.1M969.5 207.0V219.6" stroke="#8c96b0" stroke-width="1" fill="none" shape-rendering="crispEdges"/><rect x="387" y="90" width="1" height="169" fill="#50c8f0"/><path d="M387 90 L395 90 L387 98Z" fill="#60d0f8"/><path d="M387 250 L391 250 Q395 250 395 254.5 Q395 259 391 259 L387 259Z" fill="#1a9a2c"/><rect x="970" y="90" width="1" height="169" fill="#50c8f0"/><path d="M971 90 L963 90 L971 99Z" fill="#60d0f8"/><path d="M971 250 L967 250 Q963 250 963 254.5 Q963 259 967 259 L971 259Z" fill="#d82020"/></svg>
<div style="left:401px;top:257px;width:2px;height:1px;background:#4a5262;"></div>
<div style="left:445px;top:257px;width:2px;height:1px;background:#4a5262;"></div>
<div style="left:489px;top:257px;width:2px;height:1px;background:#4a5262;"></div>
<div style="left:504px;top:257px;width:2px;height:1px;background:#4a5262;"></div>
<div style="left:533px;top:257px;width:2px;height:1px;background:#4a5262;"></div>
<div style="left:577px;top:257px;width:2px;height:1px;background:#4a5262;"></div>
<div style="left:621px;top:257px;width:2px;height:1px;background:#4a5262;"></div>
<div class="t" style="left:387px;top:265.69px;font-size:11px;line-height:11px;font-weight:400;color:#a6bce4;">amenbreak.wav</div>
<div class="t" style="left:635px;top:267.11px;font-size:10.5px;line-height:10.5px;font-weight:400;color:#8a92a4;">Volume</div>
<div class="t" style="left:680px;top:267.11px;font-size:10.5px;line-height:10.5px;font-weight:400;color:#a6bce4;">0 dB</div>
<div class="t" style="left:733px;top:267.11px;font-size:10.5px;line-height:10.5px;font-weight:400;color:#8a92a4;">Pan</div>
<div class="t" style="left:765px;top:267.11px;font-size:10.5px;line-height:10.5px;font-weight:400;color:#a6bce4;">0%</div>
<div class="t" style="left:816px;top:267.11px;font-size:10.5px;line-height:10.5px;font-weight:400;color:#8a92a4;">Tune</div>
<div class="t" style="left:849.5px;top:267.11px;font-size:10.5px;line-height:10.5px;font-weight:400;color:#a6bce4;">0 st</div>
<div class="t" style="left:898.5px;top:267.11px;font-size:10.5px;line-height:10.5px;font-weight:400;color:#8a92a4;">Fine</div>
<div class="t" style="left:936.5px;top:267.11px;font-size:10.5px;line-height:10.5px;font-weight:400;color:#a6bce4;">0</div>
<svg style="left:711.5px;top:264px" width="8" height="17" viewBox="0 0 8 17"><path d="M0 7.5 L4.0 0 L8 7.5Z M0 9.5 L8 9.5 L4.0 17Z" fill="#4e5666"/></svg>
<svg style="left:794.5px;top:264px" width="8" height="17" viewBox="0 0 8 17"><path d="M0 7.5 L4.0 0 L8 7.5Z M0 9.5 L8 9.5 L4.0 17Z" fill="#4e5666"/></svg>
<svg style="left:876.5px;top:264px" width="8" height="17" viewBox="0 0 8 17"><path d="M0 7.5 L4.0 0 L8 7.5Z M0 9.5 L8 9.5 L4.0 17Z" fill="#4e5666"/></svg>
<svg style="left:960.5px;top:264px" width="8" height="17" viewBox="0 0 8 17"><path d="M0 7.5 L4.0 0 L8 7.5Z M0 9.5 L8 9.5 L4.0 17Z" fill="#4e5666"/></svg>
<div style="left:379px;top:310px;width:600px;height:80px;background:#cececc;border-radius:3px"></div>
<div class="t" style="left:529.5px;top:321.61px;width:300px;text-align:center;font-size:10.5px;line-height:10.5px;font-weight:700;color:#000;">VOICE CONTROLS</div>
<div style="left:395px;top:336px;width:3px;height:44px;background:#333333;"></div>
<div style="left:400px;top:336px;width:3px;height:44px;background:#333333;"></div>
<svg style="left:407px;top:336px" width="32" height="32" viewBox="407 336 32 32"><circle cx="423" cy="352" r="14.5" fill="#a5a5a5"/><path d="M423 352 L415.32 364.30 A14.5 14.5 0 0 0 430.68 364.30Z" fill="#8a8a8a"/><circle cx="423" cy="352" r="14.5" fill="none" stroke="#666666" stroke-width="1.2"/><circle cx="423" cy="352" r="9.705" fill="url(#kg)" stroke="#808080" stroke-width="1.5"/><path d="M414.82 349.02 A8.705 8.705 0 0 1 431.18 349.02" fill="none" stroke="#f2f2f2" stroke-width="1"/><circle cx="423.00" cy="346.50" r="2.1" fill="#000"/></svg>
<div class="t" style="left:273.0px;top:371.53px;width:300px;text-align:center;font-size:10px;line-height:10px;font-weight:700;color:#000;">GAIN</div>
<svg style="left:439px;top:336px" width="32" height="32" viewBox="439 336 32 32"><circle cx="455" cy="352" r="14.5" fill="#a5a5a5"/><path d="M455 352 L447.32 364.30 A14.5 14.5 0 0 0 462.68 364.30Z" fill="#8a8a8a"/><circle cx="455" cy="352" r="14.5" fill="none" stroke="#666666" stroke-width="1.2"/><circle cx="455" cy="352" r="9.705" fill="url(#kg)" stroke="#808080" stroke-width="1.5"/><path d="M446.82 349.02 A8.705 8.705 0 0 1 463.18 349.02" fill="none" stroke="#f2f2f2" stroke-width="1"/><circle cx="455.00" cy="346.50" r="2.1" fill="#000"/></svg>
<div class="t" style="left:305.0px;top:371.53px;width:300px;text-align:center;font-size:10px;line-height:10px;font-weight:700;color:#000;">PAN</div>
<svg style="left:479px;top:336px" width="32" height="32" viewBox="479 336 32 32"><circle cx="495" cy="352" r="14.5" fill="#a5a5a5"/><path d="M495 352 L487.32 364.30 A14.5 14.5 0 0 0 502.68 364.30Z" fill="#8a8a8a"/><circle cx="495" cy="352" r="14.5" fill="none" stroke="#666666" stroke-width="1.2"/><circle cx="495" cy="352" r="9.705" fill="url(#kg)" stroke="#808080" stroke-width="1.5"/><path d="M486.82 349.02 A8.705 8.705 0 0 1 503.18 349.02" fill="none" stroke="#f2f2f2" stroke-width="1"/><circle cx="495.00" cy="346.50" r="2.1" fill="#000"/></svg>
<div class="t" style="left:345.0px;top:371.53px;width:300px;text-align:center;font-size:10px;line-height:10px;font-weight:700;color:#000;">TUNE</div>
<svg style="left:511px;top:336px" width="32" height="32" viewBox="511 336 32 32"><circle cx="527" cy="352" r="14.5" fill="#a5a5a5"/><path d="M527 352 L519.32 364.30 A14.5 14.5 0 0 0 534.68 364.30Z" fill="#8a8a8a"/><circle cx="527" cy="352" r="14.5" fill="none" stroke="#666666" stroke-width="1.2"/><circle cx="527" cy="352" r="9.705" fill="url(#kg)" stroke="#808080" stroke-width="1.5"/><path d="M518.82 349.02 A8.705 8.705 0 0 1 535.18 349.02" fill="none" stroke="#f2f2f2" stroke-width="1"/><circle cx="527.00" cy="346.50" r="2.1" fill="#000"/></svg>
<div class="t" style="left:377.0px;top:371.53px;width:300px;text-align:center;font-size:10px;line-height:10px;font-weight:700;color:#000;">FINE</div>
<div style="left:551px;top:352px;width:64px;height:16px;background:#242b3a;border-radius:3px"></div>
<div class="t" style="left:433.0px;top:355.11px;width:300px;text-align:center;font-size:10.5px;line-height:10.5px;font-weight:400;color:#a6bce4;">Note</div>
<div class="t" style="left:433.0px;top:371.53px;width:300px;text-align:center;font-size:10px;line-height:10px;font-weight:700;color:#000;">TRACK</div>
<div style="left:623px;top:352px;width:64px;height:16px;background:#242b3a;border-radius:3px"></div>
<div class="t" style="left:505.0px;top:355.11px;width:300px;text-align:center;font-size:10.5px;line-height:10.5px;font-weight:400;color:#a6bce4;">Loop Cont.</div>
<div class="t" style="left:505.0px;top:371.53px;width:300px;text-align:center;font-size:10px;line-height:10px;font-weight:700;color:#000;">TRIGGER</div>
<div style="left:695px;top:352px;width:64px;height:16px;background:#242b3a;border-radius:3px"></div>
<div class="t" style="left:577.0px;top:355.11px;width:300px;text-align:center;font-size:10.5px;line-height:10.5px;font-weight:400;color:#a6bce4;">Loop</div>
<div class="t" style="left:577.0px;top:371.53px;width:300px;text-align:center;font-size:10px;line-height:10px;font-weight:700;color:#000;">BOUNDS</div>
<div style="left:767px;top:352px;width:64px;height:16px;background:#242b3a;border-radius:3px"></div>
<div class="t" style="left:649.0px;top:355.11px;width:300px;text-align:center;font-size:10.5px;line-height:10.5px;font-weight:400;color:#a6bce4;">None</div>
<div class="t" style="left:649.0px;top:371.53px;width:300px;text-align:center;font-size:10px;line-height:10px;font-weight:700;color:#000;">RESET</div>
<div style="left:859px;top:352px;width:64px;height:16px;background:#242b3a;border-radius:3px"></div>
<div class="t" style="left:741.0px;top:355.11px;width:300px;text-align:center;font-size:10.5px;line-height:10.5px;font-weight:400;color:#a6bce4;">Poly</div>
<div class="t" style="left:741.0px;top:371.53px;width:300px;text-align:center;font-size:10px;line-height:10px;font-weight:700;color:#000;">MODE</div>
<div style="left:934px;top:339px;width:26px;height:26px;border-radius:50%;background:#c4c4c4"></div>
<div style="left:379px;top:392px;width:600px;height:252px;background:#cececc;border-radius:3px"></div>
<div class="t" style="left:324.0px;top:404.53px;width:300px;text-align:center;font-size:10px;line-height:10px;font-weight:700;color:#000;">FILTER ONE</div>
<div style="left:402.5px;top:425.5px;width:25.0px;height:25.0px;border-radius:50%;background:#c4c4c4"></div>
<div style="left:442.5px;top:425.5px;width:25.0px;height:25.0px;border-radius:50%;background:#c4c4c4"></div>
<div style="left:482.5px;top:425.5px;width:25.0px;height:25.0px;border-radius:50%;background:#c4c4c4"></div>
<div style="left:522.5px;top:425.5px;width:25.0px;height:25.0px;border-radius:50%;background:#c4c4c4"></div>
<div style="left:402px;top:476px;width:72px;height:18px;background:#242b3a;border-radius:3px"></div>
<div class="t" style="left:288.0px;top:480.11px;width:300px;text-align:center;font-size:10.5px;line-height:10.5px;font-weight:400;color:#a6bce4;">-</div>
<div style="left:482px;top:476px;width:72px;height:18px;background:#242b3a;border-radius:3px"></div>
<div class="t" style="left:485.5px;top:480.11px;font-size:10.5px;line-height:10.5px;font-weight:400;color:#8a92a4;">Key</div>
<div class="t" style="left:512.5px;top:480.11px;font-size:10.5px;line-height:10.5px;font-weight:400;color:#a6bce4;">50%</div>
<svg style="left:542px;top:477.5px" width="8" height="15" viewBox="0 0 8 15"><path d="M0 6.5 L4.0 0 L8 6.5Z M0 8.5 L8 8.5 L4.0 15Z" fill="#535b6b"/></svg>
<div class="t" style="left:440.5px;top:404.53px;width:300px;text-align:center;font-size:10px;line-height:10px;font-weight:700;color:#000;">BLEND</div>
<svg style="left:571px;top:418px" width="40" height="40" viewBox="571 418 40 40"><circle cx="591" cy="438" r="18.5" fill="#a5a5a5"/><path d="M591 438 L581.20 453.69 A18.5 18.5 0 0 0 600.80 453.69Z" fill="#8a8a8a"/><circle cx="591" cy="438" r="18.5" fill="none" stroke="#666666" stroke-width="1.2"/><circle cx="591" cy="438" r="11.299999999999999" fill="url(#kg)" stroke="#808080" stroke-width="1.5"/><path d="M581.32 434.48 A10.299999999999999 10.299999999999999 0 0 1 600.68 434.48" fill="none" stroke="#f2f2f2" stroke-width="1"/><circle cx="594.19" cy="443.53" r="2.3" fill="#000"/></svg>
<div class="t" style="left:440.5px;top:462.53px;width:300px;text-align:center;font-size:10px;line-height:10px;font-weight:700;color:#000;">F1 - F2</div>
<div style="left:571px;top:476px;width:40px;height:18px;background:#242b3a;border-radius:3px"></div>
<div class="t" style="left:441.0px;top:480.11px;width:300px;text-align:center;font-size:10.5px;line-height:10.5px;font-weight:400;color:#a6bce4;">Serial</div>
<div class="t" style="left:577.0px;top:404.53px;width:300px;text-align:center;font-size:10px;line-height:10px;font-weight:700;color:#000;">AMP ENV</div>
<svg style="left:627px;top:418px" width="40" height="40" viewBox="627 418 40 40"><circle cx="647" cy="438" r="18.5" fill="#a5a5a5"/><path d="M647 438 L637.20 453.69 A18.5 18.5 0 0 0 656.80 453.69Z" fill="#8a8a8a"/><circle cx="647" cy="438" r="18.5" fill="none" stroke="#666666" stroke-width="1.2"/><circle cx="647" cy="438" r="11.299999999999999" fill="url(#kg)" stroke="#808080" stroke-width="1.5"/><path d="M637.32 434.48 A10.299999999999999 10.299999999999999 0 0 1 656.68 434.48" fill="none" stroke="#f2f2f2" stroke-width="1"/><circle cx="643.62" cy="443.41" r="2.3" fill="#000"/></svg>
<div class="t" style="left:497.0px;top:462.53px;width:300px;text-align:center;font-size:10px;line-height:10px;font-weight:700;color:#000;">A</div>
<svg style="left:667px;top:418px" width="40" height="40" viewBox="667 418 40 40"><circle cx="687" cy="438" r="18.5" fill="#a5a5a5"/><path d="M687 438 L677.20 453.69 A18.5 18.5 0 0 0 696.80 453.69Z" fill="#8a8a8a"/><circle cx="687" cy="438" r="18.5" fill="none" stroke="#666666" stroke-width="1.2"/><circle cx="687" cy="438" r="11.299999999999999" fill="url(#kg)" stroke="#808080" stroke-width="1.5"/><path d="M677.32 434.48 A10.299999999999999 10.299999999999999 0 0 1 696.68 434.48" fill="none" stroke="#f2f2f2" stroke-width="1"/><circle cx="683.62" cy="443.41" r="2.3" fill="#000"/></svg>
<div class="t" style="left:537.0px;top:462.53px;width:300px;text-align:center;font-size:10px;line-height:10px;font-weight:700;color:#000;">H</div>
<svg style="left:707px;top:418px" width="40" height="40" viewBox="707 418 40 40"><circle cx="727" cy="438" r="18.5" fill="#a5a5a5"/><path d="M727 438 L717.20 453.69 A18.5 18.5 0 0 0 736.80 453.69Z" fill="#8a8a8a"/><circle cx="727" cy="438" r="18.5" fill="none" stroke="#666666" stroke-width="1.2"/><circle cx="727" cy="438" r="11.299999999999999" fill="url(#kg)" stroke="#808080" stroke-width="1.5"/><path d="M717.32 434.48 A10.299999999999999 10.299999999999999 0 0 1 736.68 434.48" fill="none" stroke="#f2f2f2" stroke-width="1"/><circle cx="723.62" cy="443.41" r="2.3" fill="#000"/></svg>
<div class="t" style="left:577.0px;top:462.53px;width:300px;text-align:center;font-size:10px;line-height:10px;font-weight:700;color:#000;">D</div>
<svg style="left:747px;top:418px" width="40" height="40" viewBox="747 418 40 40"><circle cx="767" cy="438" r="18.5" fill="#a5a5a5"/><path d="M767 438 L757.20 453.69 A18.5 18.5 0 0 0 776.80 453.69Z" fill="#8a8a8a"/><circle cx="767" cy="438" r="18.5" fill="none" stroke="#666666" stroke-width="1.2"/><circle cx="767" cy="438" r="11.299999999999999" fill="url(#kg)" stroke="#808080" stroke-width="1.5"/><path d="M757.32 434.48 A10.299999999999999 10.299999999999999 0 0 1 776.68 434.48" fill="none" stroke="#f2f2f2" stroke-width="1"/><circle cx="770.38" cy="443.41" r="2.3" fill="#000"/></svg>
<div class="t" style="left:617.0px;top:462.53px;width:300px;text-align:center;font-size:10px;line-height:10px;font-weight:700;color:#000;">S</div>
<svg style="left:787px;top:418px" width="40" height="40" viewBox="787 418 40 40"><circle cx="807" cy="438" r="18.5" fill="#a5a5a5"/><path d="M807 438 L797.20 453.69 A18.5 18.5 0 0 0 816.80 453.69Z" fill="#8a8a8a"/><circle cx="807" cy="438" r="18.5" fill="none" stroke="#666666" stroke-width="1.2"/><circle cx="807" cy="438" r="11.299999999999999" fill="url(#kg)" stroke="#808080" stroke-width="1.5"/><path d="M797.32 434.48 A10.299999999999999 10.299999999999999 0 0 1 816.68 434.48" fill="none" stroke="#f2f2f2" stroke-width="1"/><circle cx="801.08" cy="435.61" r="2.3" fill="#000"/></svg>
<div class="t" style="left:657.0px;top:462.53px;width:300px;text-align:center;font-size:10px;line-height:10px;font-weight:700;color:#000;">R</div>
<div style="left:707px;top:476px;width:58px;height:18px;background:#242b3a;border-radius:3px"></div>
<div class="t" style="left:586.0px;top:479.69px;width:300px;text-align:center;font-size:11px;line-height:11px;font-weight:400;color:#a6bce4;">Snap Off</div>
<div style="left:769px;top:476px;width:58px;height:18px;background:#242b3a;border-radius:3px"></div>
<div class="t" style="left:648.0px;top:479.69px;width:300px;text-align:center;font-size:11px;line-height:11px;font-weight:400;color:#a6bce4;">V:80%</div>
<div class="t" style="left:753.0px;top:404.53px;width:300px;text-align:center;font-size:10px;line-height:10px;font-weight:700;color:#000;">LFO ONE</div>
<svg style="left:843px;top:418px" width="40" height="40" viewBox="843 418 40 40"><circle cx="863" cy="438" r="18.5" fill="#a5a5a5"/><path d="M863 438 L853.20 453.69 A18.5 18.5 0 0 0 872.80 453.69Z" fill="#8a8a8a"/><circle cx="863" cy="438" r="18.5" fill="none" stroke="#666666" stroke-width="1.2"/><circle cx="863" cy="438" r="11.299999999999999" fill="url(#kg)" stroke="#808080" stroke-width="1.5"/><path d="M853.32 434.48 A10.299999999999999 10.299999999999999 0 0 1 872.68 434.48" fill="none" stroke="#f2f2f2" stroke-width="1"/><circle cx="863.00" cy="431.62" r="2.3" fill="#000"/></svg>
<div class="t" style="left:713.0px;top:462.53px;width:300px;text-align:center;font-size:10px;line-height:10px;font-weight:700;color:#000;">RATE</div>
<svg style="left:883px;top:418px" width="40" height="40" viewBox="883 418 40 40"><circle cx="903" cy="438" r="18.5" fill="#a5a5a5"/><path d="M903 438 L893.20 453.69 A18.5 18.5 0 0 0 912.80 453.69Z" fill="#8a8a8a"/><circle cx="903" cy="438" r="18.5" fill="none" stroke="#666666" stroke-width="1.2"/><circle cx="903" cy="438" r="11.299999999999999" fill="url(#kg)" stroke="#808080" stroke-width="1.5"/><path d="M893.32 434.48 A10.299999999999999 10.299999999999999 0 0 1 912.68 434.48" fill="none" stroke="#f2f2f2" stroke-width="1"/><circle cx="903.00" cy="431.62" r="2.3" fill="#000"/></svg>
<div class="t" style="left:753.0px;top:462.53px;width:300px;text-align:center;font-size:10px;line-height:10px;font-weight:700;color:#000;">PH</div>
<svg style="left:923px;top:418px" width="40" height="40" viewBox="923 418 40 40"><circle cx="943" cy="438" r="18.5" fill="#a5a5a5"/><path d="M943 438 L933.20 453.69 A18.5 18.5 0 0 0 952.80 453.69Z" fill="#8a8a8a"/><circle cx="943" cy="438" r="18.5" fill="none" stroke="#666666" stroke-width="1.2"/><circle cx="943" cy="438" r="11.299999999999999" fill="url(#kg)" stroke="#808080" stroke-width="1.5"/><path d="M933.32 434.48 A10.299999999999999 10.299999999999999 0 0 1 952.68 434.48" fill="none" stroke="#f2f2f2" stroke-width="1"/><circle cx="943.00" cy="431.62" r="2.3" fill="#000"/></svg>
<div class="t" style="left:793.0px;top:462.53px;width:300px;text-align:center;font-size:10px;line-height:10px;font-weight:700;color:#000;">SYM</div>
<div style="left:843px;top:476px;width:58px;height:18px;background:#242b3a;border-radius:3px"></div>
<div class="t" style="left:722.0px;top:480.11px;width:300px;text-align:center;font-size:10.5px;line-height:10.5px;font-weight:400;color:#a6bce4;">Tri</div>
<div style="left:905px;top:476px;width:56px;height:18px;background:#242b3a;border-radius:3px"></div>
<div class="t" style="left:783.0px;top:480.11px;width:300px;text-align:center;font-size:10.5px;line-height:10.5px;font-weight:400;color:#a6bce4;">0.1s</div>
<div class="t" style="left:324.0px;top:514.54px;width:300px;text-align:center;font-size:10px;line-height:10px;font-weight:700;color:#000;">FILTER TWO</div>
<div style="left:402.5px;top:535.5px;width:25.0px;height:25.0px;border-radius:50%;background:#c4c4c4"></div>
<div style="left:442.5px;top:535.5px;width:25.0px;height:25.0px;border-radius:50%;background:#c4c4c4"></div>
<div style="left:482.5px;top:535.5px;width:25.0px;height:25.0px;border-radius:50%;background:#c4c4c4"></div>
<div style="left:522.5px;top:535.5px;width:25.0px;height:25.0px;border-radius:50%;background:#c4c4c4"></div>
<div style="left:399px;top:586px;width:72px;height:18px;background:#242b3a;border-radius:3px"></div>
<div class="t" style="left:285.0px;top:590.11px;width:300px;text-align:center;font-size:10.5px;line-height:10.5px;font-weight:400;color:#a6bce4;">-</div>
<div style="left:479px;top:586px;width:72px;height:18px;background:#242b3a;border-radius:3px"></div>
<div class="t" style="left:482.5px;top:590.11px;font-size:10.5px;line-height:10.5px;font-weight:400;color:#8a92a4;">Key</div>
<div class="t" style="left:509.5px;top:590.11px;font-size:10.5px;line-height:10.5px;font-weight:400;color:#a6bce4;">50%</div>
<svg style="left:539px;top:587.5px" width="8" height="15" viewBox="0 0 8 15"><path d="M0 6.5 L4.0 0 L8 6.5Z M0 8.5 L8 8.5 L4.0 15Z" fill="#535b6b"/></svg>
<div class="t" style="left:577.0px;top:514.54px;width:300px;text-align:center;font-size:10px;line-height:10px;font-weight:700;color:#000;">MOD ENV</div>
<svg style="left:627px;top:528px" width="40" height="40" viewBox="627 528 40 40"><circle cx="647" cy="548" r="18.5" fill="#a5a5a5"/><path d="M647 548 L637.20 563.69 A18.5 18.5 0 0 0 656.80 563.69Z" fill="#8a8a8a"/><circle cx="647" cy="548" r="18.5" fill="none" stroke="#666666" stroke-width="1.2"/><circle cx="647" cy="548" r="11.299999999999999" fill="url(#kg)" stroke="#808080" stroke-width="1.5"/><path d="M637.32 544.48 A10.299999999999999 10.299999999999999 0 0 1 656.68 544.48" fill="none" stroke="#f2f2f2" stroke-width="1"/><circle cx="643.62" cy="553.41" r="2.3" fill="#000"/></svg>
<div class="t" style="left:497.0px;top:572.54px;width:300px;text-align:center;font-size:10px;line-height:10px;font-weight:700;color:#000;">A</div>
<svg style="left:667px;top:528px" width="40" height="40" viewBox="667 528 40 40"><circle cx="687" cy="548" r="18.5" fill="#a5a5a5"/><path d="M687 548 L677.20 563.69 A18.5 18.5 0 0 0 696.80 563.69Z" fill="#8a8a8a"/><circle cx="687" cy="548" r="18.5" fill="none" stroke="#666666" stroke-width="1.2"/><circle cx="687" cy="548" r="11.299999999999999" fill="url(#kg)" stroke="#808080" stroke-width="1.5"/><path d="M677.32 544.48 A10.299999999999999 10.299999999999999 0 0 1 696.68 544.48" fill="none" stroke="#f2f2f2" stroke-width="1"/><circle cx="683.62" cy="553.41" r="2.3" fill="#000"/></svg>
<div class="t" style="left:537.0px;top:572.54px;width:300px;text-align:center;font-size:10px;line-height:10px;font-weight:700;color:#000;">H</div>
<svg style="left:707px;top:528px" width="40" height="40" viewBox="707 528 40 40"><circle cx="727" cy="548" r="18.5" fill="#a5a5a5"/><path d="M727 548 L717.20 563.69 A18.5 18.5 0 0 0 736.80 563.69Z" fill="#8a8a8a"/><circle cx="727" cy="548" r="18.5" fill="none" stroke="#666666" stroke-width="1.2"/><circle cx="727" cy="548" r="11.299999999999999" fill="url(#kg)" stroke="#808080" stroke-width="1.5"/><path d="M717.32 544.48 A10.299999999999999 10.299999999999999 0 0 1 736.68 544.48" fill="none" stroke="#f2f2f2" stroke-width="1"/><circle cx="721.47" cy="544.81" r="2.3" fill="#000"/></svg>
<div class="t" style="left:577.0px;top:572.54px;width:300px;text-align:center;font-size:10px;line-height:10px;font-weight:700;color:#000;">D</div>
<svg style="left:747px;top:528px" width="40" height="40" viewBox="747 528 40 40"><circle cx="767" cy="548" r="18.5" fill="#a5a5a5"/><path d="M767 548 L757.20 563.69 A18.5 18.5 0 0 0 776.80 563.69Z" fill="#8a8a8a"/><circle cx="767" cy="548" r="18.5" fill="none" stroke="#666666" stroke-width="1.2"/><circle cx="767" cy="548" r="11.299999999999999" fill="url(#kg)" stroke="#808080" stroke-width="1.5"/><path d="M757.32 544.48 A10.299999999999999 10.299999999999999 0 0 1 776.68 544.48" fill="none" stroke="#f2f2f2" stroke-width="1"/><circle cx="761.47" cy="544.81" r="2.3" fill="#000"/></svg>
<div class="t" style="left:617.0px;top:572.54px;width:300px;text-align:center;font-size:10px;line-height:10px;font-weight:700;color:#000;">S</div>
<svg style="left:787px;top:528px" width="40" height="40" viewBox="787 528 40 40"><circle cx="807" cy="548" r="18.5" fill="#a5a5a5"/><path d="M807 548 L797.20 563.69 A18.5 18.5 0 0 0 816.80 563.69Z" fill="#8a8a8a"/><circle cx="807" cy="548" r="18.5" fill="none" stroke="#666666" stroke-width="1.2"/><circle cx="807" cy="548" r="11.299999999999999" fill="url(#kg)" stroke="#808080" stroke-width="1.5"/><path d="M797.32 544.48 A10.299999999999999 10.299999999999999 0 0 1 816.68 544.48" fill="none" stroke="#f2f2f2" stroke-width="1"/><circle cx="801.47" cy="544.81" r="2.3" fill="#000"/></svg>
<div class="t" style="left:657.0px;top:572.54px;width:300px;text-align:center;font-size:10px;line-height:10px;font-weight:700;color:#000;">R</div>
<div style="left:707px;top:586px;width:58px;height:18px;background:#242b3a;border-radius:3px"></div>
<div class="t" style="left:586.0px;top:589.69px;width:300px;text-align:center;font-size:11px;line-height:11px;font-weight:400;color:#a6bce4;">Snap Off</div>
<div style="left:769px;top:586px;width:58px;height:18px;background:#242b3a;border-radius:3px"></div>
<div class="t" style="left:648.0px;top:589.69px;width:300px;text-align:center;font-size:11px;line-height:11px;font-weight:400;color:#a6bce4;">V:80%</div>
<div class="t" style="left:753.0px;top:514.54px;width:300px;text-align:center;font-size:10px;line-height:10px;font-weight:700;color:#000;">LFO TWO</div>
<svg style="left:843px;top:528px" width="40" height="40" viewBox="843 528 40 40"><circle cx="863" cy="548" r="18.5" fill="#a5a5a5"/><path d="M863 548 L853.20 563.69 A18.5 18.5 0 0 0 872.80 563.69Z" fill="#8a8a8a"/><circle cx="863" cy="548" r="18.5" fill="none" stroke="#666666" stroke-width="1.2"/><circle cx="863" cy="548" r="11.299999999999999" fill="url(#kg)" stroke="#808080" stroke-width="1.5"/><path d="M853.32 544.48 A10.299999999999999 10.299999999999999 0 0 1 872.68 544.48" fill="none" stroke="#f2f2f2" stroke-width="1"/><circle cx="863.00" cy="541.62" r="2.3" fill="#000"/></svg>
<div class="t" style="left:713.0px;top:572.54px;width:300px;text-align:center;font-size:10px;line-height:10px;font-weight:700;color:#000;">RATE</div>
<svg style="left:883px;top:528px" width="40" height="40" viewBox="883 528 40 40"><circle cx="903" cy="548" r="18.5" fill="#a5a5a5"/><path d="M903 548 L893.20 563.69 A18.5 18.5 0 0 0 912.80 563.69Z" fill="#8a8a8a"/><circle cx="903" cy="548" r="18.5" fill="none" stroke="#666666" stroke-width="1.2"/><circle cx="903" cy="548" r="11.299999999999999" fill="url(#kg)" stroke="#808080" stroke-width="1.5"/><path d="M893.32 544.48 A10.299999999999999 10.299999999999999 0 0 1 912.68 544.48" fill="none" stroke="#f2f2f2" stroke-width="1"/><circle cx="903.00" cy="541.62" r="2.3" fill="#000"/></svg>
<div class="t" style="left:753.0px;top:572.54px;width:300px;text-align:center;font-size:10px;line-height:10px;font-weight:700;color:#000;">PH</div>
<svg style="left:923px;top:528px" width="40" height="40" viewBox="923 528 40 40"><circle cx="943" cy="548" r="18.5" fill="#a5a5a5"/><path d="M943 548 L933.20 563.69 A18.5 18.5 0 0 0 952.80 563.69Z" fill="#8a8a8a"/><circle cx="943" cy="548" r="18.5" fill="none" stroke="#666666" stroke-width="1.2"/><circle cx="943" cy="548" r="11.299999999999999" fill="url(#kg)" stroke="#808080" stroke-width="1.5"/><path d="M933.32 544.48 A10.299999999999999 10.299999999999999 0 0 1 952.68 544.48" fill="none" stroke="#f2f2f2" stroke-width="1"/><circle cx="943.00" cy="541.62" r="2.3" fill="#000"/></svg>
<div class="t" style="left:793.0px;top:572.54px;width:300px;text-align:center;font-size:10px;line-height:10px;font-weight:700;color:#000;">SYM</div>
<div style="left:843px;top:586px;width:58px;height:18px;background:#242b3a;border-radius:3px"></div>
<div class="t" style="left:722.0px;top:590.11px;width:300px;text-align:center;font-size:10.5px;line-height:10.5px;font-weight:400;color:#a6bce4;">Tri</div>
<div style="left:905px;top:586px;width:56px;height:18px;background:#242b3a;border-radius:3px"></div>
<div class="t" style="left:783.0px;top:590.11px;width:300px;text-align:center;font-size:10.5px;line-height:10.5px;font-weight:400;color:#a6bce4;">0.1s</div>
<div style="left:379px;top:620px;width:600px;height:24px;background:#979797;border-radius:0 0 3px 3px"></div>
<div style="left:387px;top:620px;width:140px;height:24px;background:#cececc;"></div>
<div class="t" style="left:306.5px;top:626.69px;width:300px;text-align:center;font-size:11px;line-height:11px;font-weight:700;color:#000;">MAIN</div>
<div class="t" style="left:454.5px;top:627.54px;width:300px;text-align:center;font-size:10px;line-height:10px;font-weight:700;color:#000;">SEQUENCER ONE</div>
<div class="t" style="left:602.5px;top:627.54px;width:300px;text-align:center;font-size:10px;line-height:10px;font-weight:700;color:#000;">SEQUENCER TWO</div>
<div class="t" style="left:750.5px;top:627.11px;width:300px;text-align:center;font-size:10.5px;line-height:10.5px;font-weight:700;color:#000;">XY PADS</div>
<div style="left:379px;top:646px;width:600px;height:70px;background:#cececc;border-radius:3px"></div>
<div style="left:383px;top:650px;width:64px;height:27px;box-sizing:border-box;background:#a6c2ee;border:1px solid #262626;border-radius:3px"></div>
<div class="t" style="left:265.0px;top:658.11px;width:300px;text-align:center;font-size:10.5px;line-height:10.5px;font-weight:400;color:#2a3040;">Main</div>
<div style="left:383px;top:682px;width:29px;height:29px;background:#242b3a;border-radius:3px"></div>
<div class="t" style="left:247.5px;top:691.11px;width:300px;text-align:center;font-size:10.5px;line-height:10.5px;font-weight:400;color:#a6bce4;">&lt;</div>
<div style="left:417px;top:682px;width:29px;height:29px;background:#242b3a;border-radius:3px"></div>
<div class="t" style="left:281.5px;top:691.11px;width:300px;text-align:center;font-size:10.5px;line-height:10.5px;font-weight:400;color:#a6bce4;">&gt;</div>
<div style="left:451px;top:650px;width:62px;height:62px;background:#242b3a;border-radius:3px"></div>
<div class="t" style="left:332.0px;top:655.61px;width:300px;text-align:center;font-size:10.5px;line-height:10.5px;font-weight:400;color:#a6bce4;">Amp Env+</div>
<div class="t" style="left:332.0px;top:670.11px;width:300px;text-align:center;font-size:10.5px;line-height:10.5px;font-weight:400;color:#a6bce4;">via</div>
<div class="t" style="left:332.0px;top:683.11px;width:300px;text-align:center;font-size:10.5px;line-height:10.5px;font-weight:400;color:#a6bce4;">-</div>
<div style="left:517px;top:650px;width:62px;height:62px;background:#242b3a;border-radius:3px"></div>
<div class="t" style="left:398.0px;top:655.61px;width:300px;text-align:center;font-size:10.5px;line-height:10.5px;font-weight:400;color:#a6bce4;">Mod Env+</div>
<div class="t" style="left:398.0px;top:670.11px;width:300px;text-align:center;font-size:10.5px;line-height:10.5px;font-weight:400;color:#a6bce4;">via</div>
<div class="t" style="left:398.0px;top:683.11px;width:300px;text-align:center;font-size:10.5px;line-height:10.5px;font-weight:400;color:#a6bce4;">-</div>
<div style="left:583px;top:650px;width:62px;height:62px;background:#242b3a;border-radius:3px"></div>
<div class="t" style="left:464.0px;top:655.61px;width:300px;text-align:center;font-size:10.5px;line-height:10.5px;font-weight:400;color:#a6bce4;">LFO1+</div>
<div class="t" style="left:464.0px;top:670.11px;width:300px;text-align:center;font-size:10.5px;line-height:10.5px;font-weight:400;color:#a6bce4;">via</div>
<div class="t" style="left:464.0px;top:683.11px;width:300px;text-align:center;font-size:10.5px;line-height:10.5px;font-weight:400;color:#a6bce4;">-</div>
<div style="left:649px;top:650px;width:62px;height:62px;background:#242b3a;border-radius:3px"></div>
<div class="t" style="left:530.0px;top:655.61px;width:300px;text-align:center;font-size:10.5px;line-height:10.5px;font-weight:400;color:#a6bce4;">LFO2+</div>
<div class="t" style="left:530.0px;top:670.11px;width:300px;text-align:center;font-size:10.5px;line-height:10.5px;font-weight:400;color:#a6bce4;">via</div>
<div class="t" style="left:530.0px;top:683.11px;width:300px;text-align:center;font-size:10.5px;line-height:10.5px;font-weight:400;color:#a6bce4;">-</div>
<div style="left:715px;top:650px;width:62px;height:62px;background:#242b3a;border-radius:3px"></div>
<div class="t" style="left:596.0px;top:655.61px;width:300px;text-align:center;font-size:10.5px;line-height:10.5px;font-weight:400;color:#a6bce4;">Seq1+</div>
<div class="t" style="left:596.0px;top:670.11px;width:300px;text-align:center;font-size:10.5px;line-height:10.5px;font-weight:400;color:#a6bce4;">via</div>
<div class="t" style="left:596.0px;top:683.11px;width:300px;text-align:center;font-size:10.5px;line-height:10.5px;font-weight:400;color:#a6bce4;">-</div>
<div style="left:781px;top:650px;width:62px;height:62px;background:#242b3a;border-radius:3px"></div>
<div class="t" style="left:662.0px;top:655.61px;width:300px;text-align:center;font-size:10.5px;line-height:10.5px;font-weight:400;color:#a6bce4;">Seq2+</div>
<div class="t" style="left:662.0px;top:670.11px;width:300px;text-align:center;font-size:10.5px;line-height:10.5px;font-weight:400;color:#a6bce4;">via</div>
<div class="t" style="left:662.0px;top:683.11px;width:300px;text-align:center;font-size:10.5px;line-height:10.5px;font-weight:400;color:#a6bce4;">-</div>
<div style="left:847px;top:650px;width:62px;height:62px;background:#242b3a;border-radius:3px"></div>
<div class="t" style="left:728.0px;top:655.61px;width:300px;text-align:center;font-size:10.5px;line-height:10.5px;font-weight:400;color:#a6bce4;">Mod Whl+</div>
<div class="t" style="left:728.0px;top:670.11px;width:300px;text-align:center;font-size:10.5px;line-height:10.5px;font-weight:400;color:#a6bce4;">via</div>
<div class="t" style="left:728.0px;top:683.11px;width:300px;text-align:center;font-size:10.5px;line-height:10.5px;font-weight:400;color:#a6bce4;">-</div>
<div style="left:913px;top:650px;width:62px;height:62px;background:#242b3a;border-radius:3px"></div>
<div class="t" style="left:794.0px;top:655.61px;width:300px;text-align:center;font-size:10.5px;line-height:10.5px;font-weight:400;color:#a6bce4;">-</div>
<div class="t" style="left:794.0px;top:670.11px;width:300px;text-align:center;font-size:10.5px;line-height:10.5px;font-weight:400;color:#a6bce4;">via</div>
<div class="t" style="left:794.0px;top:683.11px;width:300px;text-align:center;font-size:10.5px;line-height:10.5px;font-weight:400;color:#a6bce4;">-</div>
</body></html>
